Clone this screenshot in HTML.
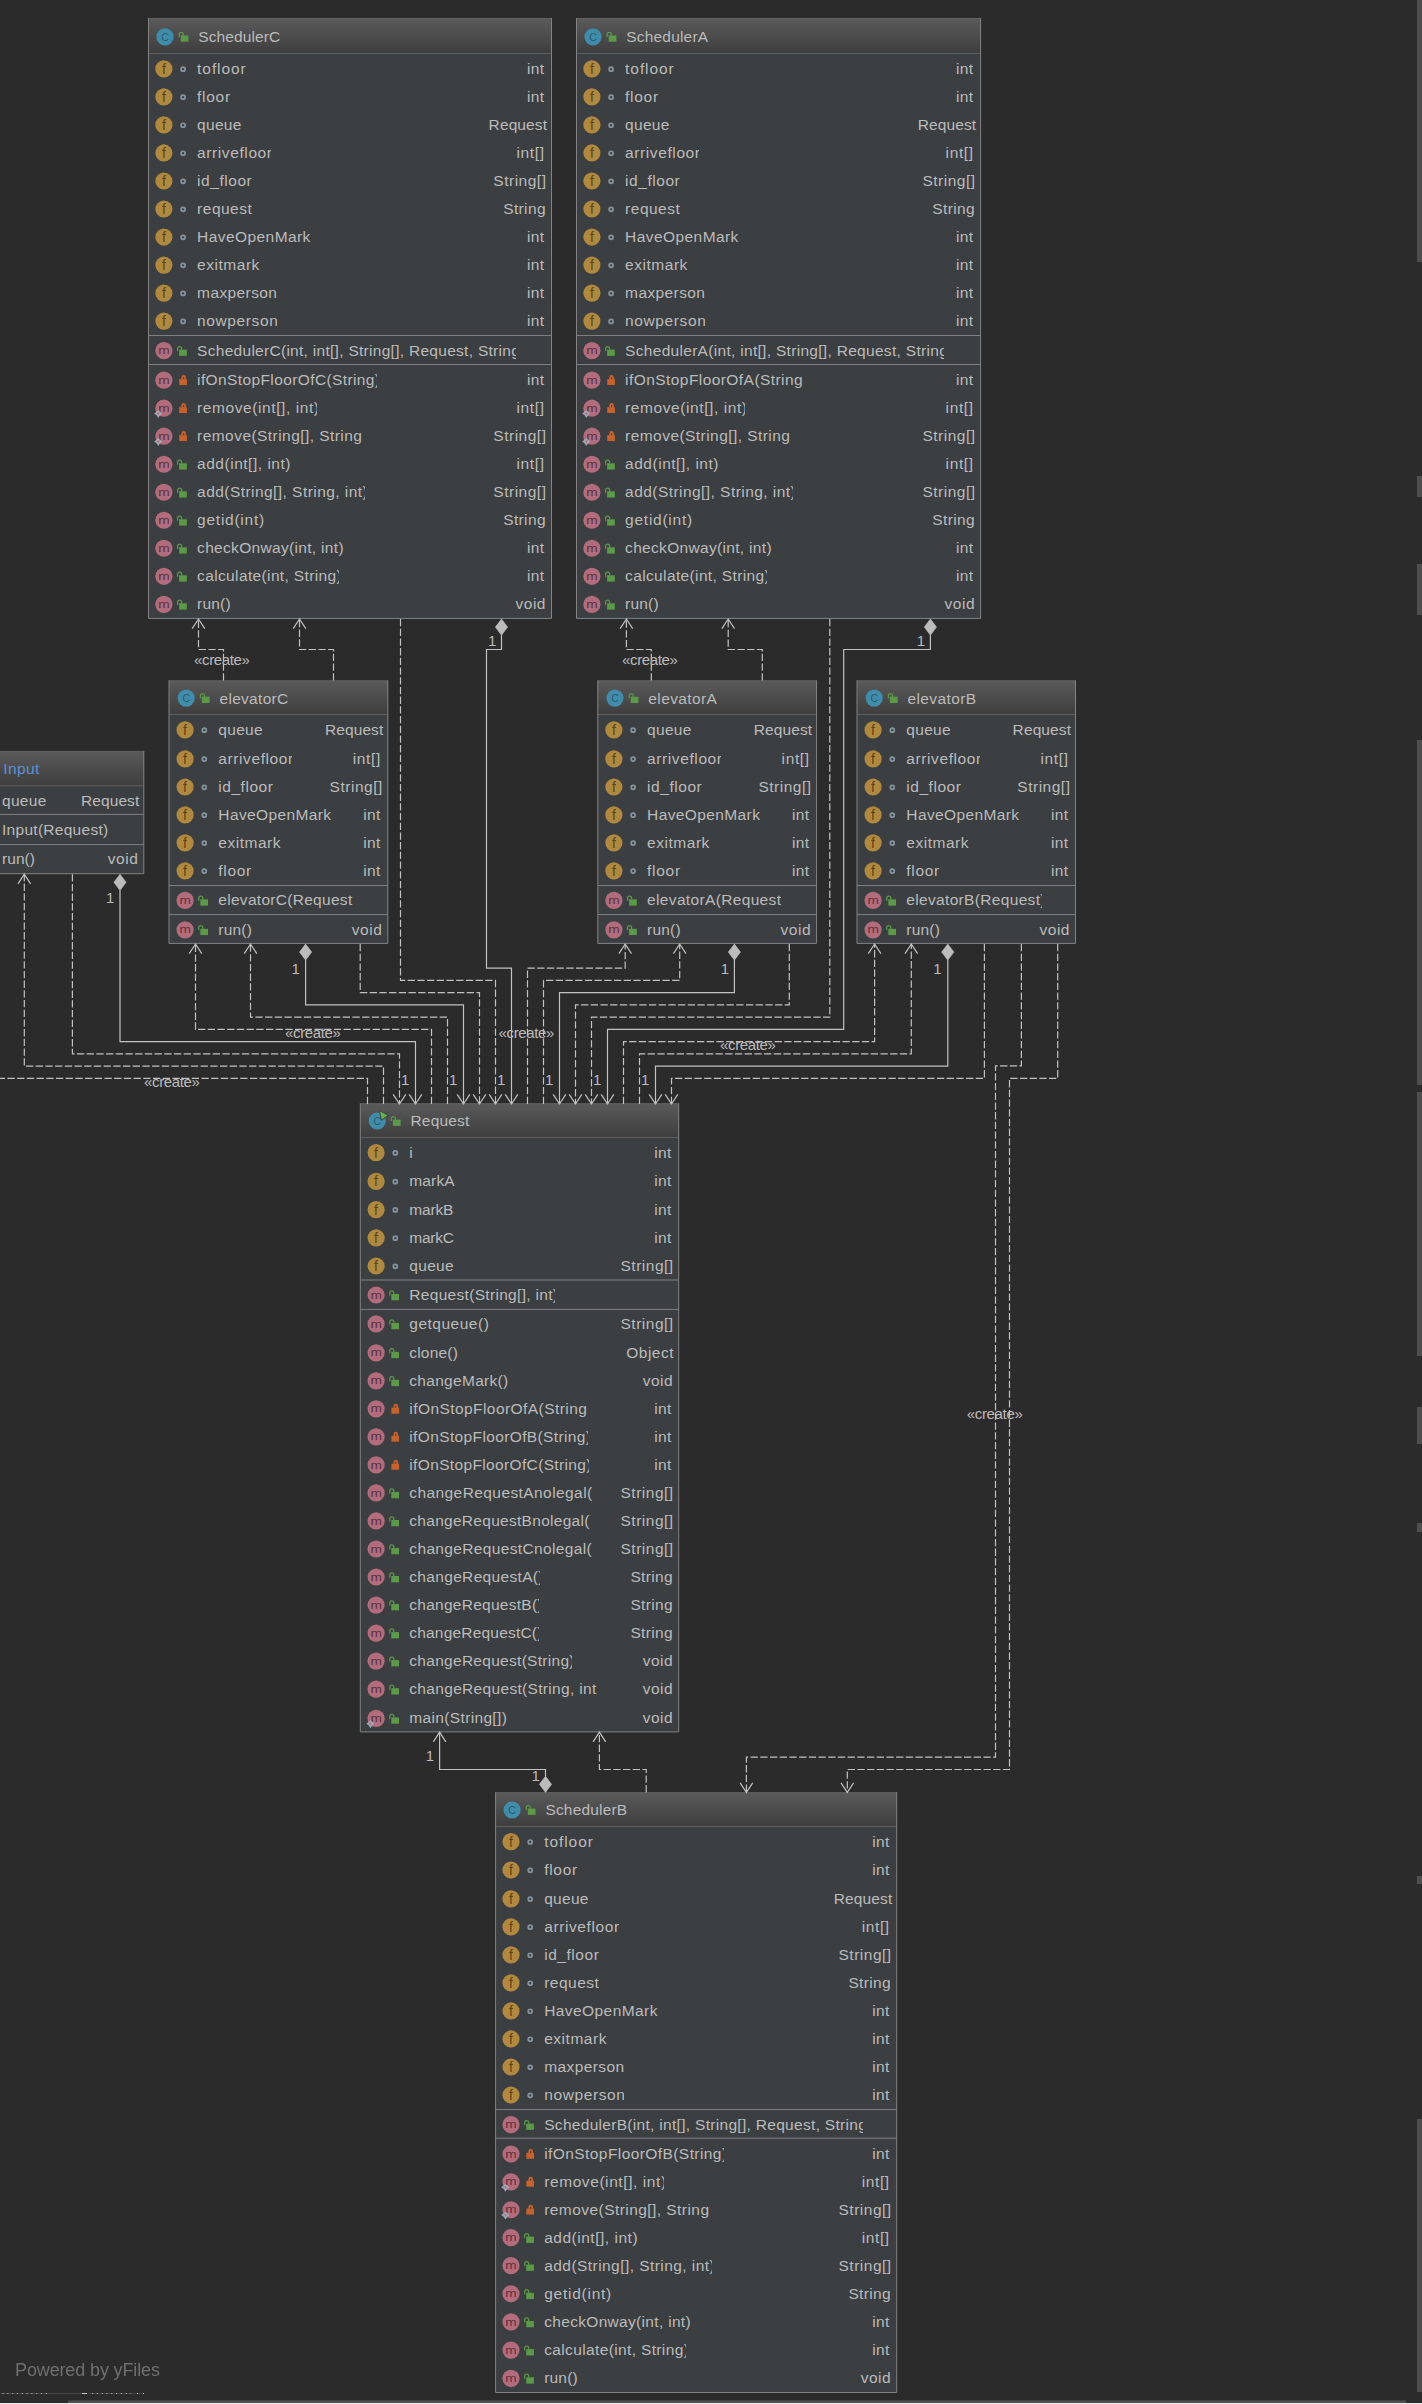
<!DOCTYPE html>
<html><head><meta charset="utf-8"><title>UML</title>
<style>
html,body{margin:0;padding:0;background:#2b2b2b;}
#c{position:relative;width:1422px;height:2404px;overflow:hidden;background:#2b2b2b;font-family:"Liberation Sans", sans-serif;font-size:15.5px;color:#bbbbbb;}
.t{position:absolute;white-space:pre;line-height:28px;height:28px;overflow:hidden;}
.ty{position:absolute;white-space:pre;line-height:28px;height:28px;text-align:right;}
.lb{position:absolute;white-space:pre;font-size:15px;line-height:16px;color:#bbbbbb;letter-spacing:-0.35px;}
.one{position:absolute;white-space:pre;font-size:15px;line-height:16px;color:#bbbbbb;}
#edges{position:absolute;left:0;top:0;}
</style></head><body>
<div id="c">
<svg id="edges" width="1422" height="2404" viewBox="0 0 1422 2404"><style>.bb{fill:none;stroke:#838383;stroke-width:1}.bt{fill:none;stroke:#626262;stroke-width:1}.hl{fill:none;stroke:#5f5f5f;stroke-width:1}.sl{fill:none;stroke:#808080;stroke-width:1}.it{font-family:"Liberation Sans",sans-serif;text-anchor:middle}.s{fill:none;stroke:#c2c2c2;stroke-width:1.2}.ds{fill:none;stroke:#c2c2c2;stroke-width:1.2;stroke-dasharray:7.3 2.4}.d{fill:#bcbcbc;stroke:#bcbcbc;stroke-width:0.6}</style><defs><linearGradient id="hg0" gradientUnits="userSpaceOnUse" x1="0" y1="18.50" x2="0" y2="53.50"><stop offset="0" stop-color="#5a5a5a"/><stop offset="1" stop-color="#3e3e3e"/></linearGradient><linearGradient id="hg1" gradientUnits="userSpaceOnUse" x1="0" y1="18.50" x2="0" y2="53.50"><stop offset="0" stop-color="#5a5a5a"/><stop offset="1" stop-color="#3e3e3e"/></linearGradient><linearGradient id="hg2" gradientUnits="userSpaceOnUse" x1="0" y1="680.80" x2="0" y2="714.50"><stop offset="0" stop-color="#5a5a5a"/><stop offset="1" stop-color="#3e3e3e"/></linearGradient><linearGradient id="hg3" gradientUnits="userSpaceOnUse" x1="0" y1="680.80" x2="0" y2="714.50"><stop offset="0" stop-color="#5a5a5a"/><stop offset="1" stop-color="#3e3e3e"/></linearGradient><linearGradient id="hg4" gradientUnits="userSpaceOnUse" x1="0" y1="680.80" x2="0" y2="714.50"><stop offset="0" stop-color="#5a5a5a"/><stop offset="1" stop-color="#3e3e3e"/></linearGradient><linearGradient id="hg5" gradientUnits="userSpaceOnUse" x1="0" y1="751.40" x2="0" y2="785.70"><stop offset="0" stop-color="#5a5a5a"/><stop offset="1" stop-color="#3e3e3e"/></linearGradient><linearGradient id="hg6" gradientUnits="userSpaceOnUse" x1="0" y1="1103.70" x2="0" y2="1137.50"><stop offset="0" stop-color="#5a5a5a"/><stop offset="1" stop-color="#3e3e3e"/></linearGradient><linearGradient id="hg7" gradientUnits="userSpaceOnUse" x1="0" y1="1792.70" x2="0" y2="1826.50"><stop offset="0" stop-color="#5a5a5a"/><stop offset="1" stop-color="#3e3e3e"/></linearGradient></defs><rect x="148.50" y="18.50" width="403.00" height="599.90" fill="#3c3f41"/><rect x="148.50" y="18.50" width="403.00" height="35.00" fill="url(#hg0)"/><path d="M148.50 53.50 H551.50" class="hl"/><path d="M148.50 335.50 H551.50 M148.50 364.50 H551.50" class="sl"/><path d="M148.50 18.50 H551.50" class="bt"/><path d="M148.50 18.00 V618.40 H551.50 V18.00" class="bb"/>
<rect x="576.50" y="18.50" width="404.10" height="599.90" fill="#3c3f41"/><rect x="576.50" y="18.50" width="404.10" height="35.00" fill="url(#hg1)"/><path d="M576.50 53.50 H980.60" class="hl"/><path d="M576.50 335.50 H980.60 M576.50 364.50 H980.60" class="sl"/><path d="M576.50 18.50 H980.60" class="bt"/><path d="M576.50 18.00 V618.40 H980.60 V18.00" class="bb"/>
<rect x="169.00" y="680.80" width="218.80" height="262.60" fill="#3c3f41"/><rect x="169.00" y="680.80" width="218.80" height="33.70" fill="url(#hg2)"/><path d="M169.00 714.50 H387.80" class="hl"/><path d="M169.00 885.50 H387.80 M169.00 914.60 H387.80" class="sl"/><path d="M169.00 680.80 H387.80" class="bt"/><path d="M169.00 680.30 V943.40 H387.80 V680.30" class="bb"/>
<rect x="597.80" y="680.80" width="218.80" height="262.60" fill="#3c3f41"/><rect x="597.80" y="680.80" width="218.80" height="33.70" fill="url(#hg3)"/><path d="M597.80 714.50 H816.60" class="hl"/><path d="M597.80 885.50 H816.60 M597.80 914.60 H816.60" class="sl"/><path d="M597.80 680.80 H816.60" class="bt"/><path d="M597.80 680.30 V943.40 H816.60 V680.30" class="bb"/>
<rect x="857.00" y="680.80" width="218.50" height="262.60" fill="#3c3f41"/><rect x="857.00" y="680.80" width="218.50" height="33.70" fill="url(#hg4)"/><path d="M857.00 714.50 H1075.50" class="hl"/><path d="M857.00 885.50 H1075.50 M857.00 914.60 H1075.50" class="sl"/><path d="M857.00 680.80 H1075.50" class="bt"/><path d="M857.00 680.30 V943.40 H1075.50 V680.30" class="bb"/>
<rect x="-46.60" y="751.40" width="190.40" height="122.30" fill="#3c3f41"/><rect x="-46.60" y="751.40" width="190.40" height="34.30" fill="url(#hg5)"/><path d="M-46.60 785.70 H143.80" class="hl"/><path d="M-46.60 814.40 H143.80 M-46.60 844.60 H143.80" class="sl"/><path d="M-46.60 751.40 H143.80" class="bt"/><path d="M-46.60 750.90 V873.70 H143.80 V750.90" class="bb"/>
<rect x="360.30" y="1103.70" width="318.40" height="628.20" fill="#3c3f41"/><rect x="360.30" y="1103.70" width="318.40" height="33.80" fill="url(#hg6)"/><path d="M360.30 1137.50 H678.70" class="hl"/><path d="M360.30 1280.00 H678.70 M360.30 1309.40 H678.70" class="sl"/><path d="M360.30 1103.70 H678.70" class="bt"/><path d="M360.30 1103.20 V1731.90 H678.70 V1103.20" class="bb"/>
<rect x="495.60" y="1792.70" width="401.10" height="599.80" fill="#3c3f41"/><rect x="495.60" y="1792.70" width="401.10" height="33.80" fill="url(#hg7)"/><path d="M495.60 1826.50 H896.70" class="hl"/><path d="M495.60 2109.50 H896.70 M495.60 2138.20 H896.70" class="sl"/><path d="M495.60 1792.70 H896.70" class="bt"/><path d="M495.60 1792.20 V2392.50 H896.70 V1792.20" class="bb"/>
<circle cx="165.00" cy="36.80" r="8.6" fill="#3f8dab"/><text x="0" y="3.7" font-size="10.5" transform="translate(165.00 37.00)" fill="#21414f" fill-opacity="0.7" class="it">C</text><rect x="180.70" y="35.40" width="7.7" height="6.3" fill="#5b9a47"/><path d="M179.20 36.90 V34.30 A2 2 0 0 1 183.20 34.30 V35.60" fill="none" stroke="#5b9a47" stroke-width="1.25"/><circle cx="163.90" cy="68.90" r="8.6" fill="#b0893e"/><text x="0" y="4.7" font-size="13.8" transform="translate(163.80 69.10)" fill="#4d3813" fill-opacity="0.9" class="it">f</text><circle cx="183.10" cy="69.20" r="2.0" fill="none" stroke="#8495a0" stroke-width="1.7"/><circle cx="163.90" cy="96.92" r="8.6" fill="#b0893e"/><text x="0" y="4.7" font-size="13.8" transform="translate(163.80 97.12)" fill="#4d3813" fill-opacity="0.9" class="it">f</text><circle cx="183.10" cy="97.22" r="2.0" fill="none" stroke="#8495a0" stroke-width="1.7"/><circle cx="163.90" cy="124.94" r="8.6" fill="#b0893e"/><text x="0" y="4.7" font-size="13.8" transform="translate(163.80 125.14)" fill="#4d3813" fill-opacity="0.9" class="it">f</text><circle cx="183.10" cy="125.24" r="2.0" fill="none" stroke="#8495a0" stroke-width="1.7"/><circle cx="163.90" cy="152.96" r="8.6" fill="#b0893e"/><text x="0" y="4.7" font-size="13.8" transform="translate(163.80 153.16)" fill="#4d3813" fill-opacity="0.9" class="it">f</text><circle cx="183.10" cy="153.26" r="2.0" fill="none" stroke="#8495a0" stroke-width="1.7"/><circle cx="163.90" cy="180.98" r="8.6" fill="#b0893e"/><text x="0" y="4.7" font-size="13.8" transform="translate(163.80 181.18)" fill="#4d3813" fill-opacity="0.9" class="it">f</text><circle cx="183.10" cy="181.28" r="2.0" fill="none" stroke="#8495a0" stroke-width="1.7"/><circle cx="163.90" cy="209.00" r="8.6" fill="#b0893e"/><text x="0" y="4.7" font-size="13.8" transform="translate(163.80 209.20)" fill="#4d3813" fill-opacity="0.9" class="it">f</text><circle cx="183.10" cy="209.30" r="2.0" fill="none" stroke="#8495a0" stroke-width="1.7"/><circle cx="163.90" cy="237.03" r="8.6" fill="#b0893e"/><text x="0" y="4.7" font-size="13.8" transform="translate(163.80 237.22)" fill="#4d3813" fill-opacity="0.9" class="it">f</text><circle cx="183.10" cy="237.33" r="2.0" fill="none" stroke="#8495a0" stroke-width="1.7"/><circle cx="163.90" cy="265.05" r="8.6" fill="#b0893e"/><text x="0" y="4.7" font-size="13.8" transform="translate(163.80 265.25)" fill="#4d3813" fill-opacity="0.9" class="it">f</text><circle cx="183.10" cy="265.35" r="2.0" fill="none" stroke="#8495a0" stroke-width="1.7"/><circle cx="163.90" cy="293.08" r="8.6" fill="#b0893e"/><text x="0" y="4.7" font-size="13.8" transform="translate(163.80 293.28)" fill="#4d3813" fill-opacity="0.9" class="it">f</text><circle cx="183.10" cy="293.38" r="2.0" fill="none" stroke="#8495a0" stroke-width="1.7"/><circle cx="163.90" cy="321.10" r="8.6" fill="#b0893e"/><text x="0" y="4.7" font-size="13.8" transform="translate(163.80 321.30)" fill="#4d3813" fill-opacity="0.9" class="it">f</text><circle cx="183.10" cy="321.40" r="2.0" fill="none" stroke="#8495a0" stroke-width="1.7"/><circle cx="163.90" cy="350.60" r="8.6" fill="#b26c7c"/><text x="0" y="3.3" font-size="12.5" transform="translate(163.90 351.50) scale(1.1 0.82)" fill="#4a2630" fill-opacity="0.85" class="it">m</text><rect x="179.10" y="349.60" width="7.7" height="6.3" fill="#5b9a47"/><path d="M177.60 351.10 V348.50 A2 2 0 0 1 181.60 348.50 V349.80" fill="none" stroke="#5b9a47" stroke-width="1.25"/><circle cx="163.90" cy="380.20" r="8.6" fill="#b26c7c"/><text x="0" y="3.3" font-size="12.5" transform="translate(163.90 381.10) scale(1.1 0.82)" fill="#4a2630" fill-opacity="0.85" class="it">m</text><rect x="179.20" y="379.10" width="7.7" height="5.9" fill="#c8622a"/><path d="M182.20 379.30 V377.40 A1.4 1.4 0 0 1 185.00 377.40 V379.30" fill="none" stroke="#c8622a" stroke-width="1.8"/><circle cx="163.90" cy="408.21" r="8.6" fill="#b26c7c"/><text x="0" y="3.3" font-size="12.5" transform="translate(163.90 409.11) scale(1.1 0.82)" fill="#4a2630" fill-opacity="0.85" class="it">m</text><path transform="translate(158.30 413.51)" d="M0 -3.5 L1.8 -1.7 L3.9 0 L1.8 1.8 L0 4.5 L-1.8 1.8 L-4.2 0 L-1.8 -1.7 Z" fill="#9db2bc" fill-opacity="0.92"/><path transform="translate(158.30 413.51)" d="M0 -1.5 L1.5 0 L0 1.5 L-1.5 0 Z" fill="#c0707f"/><rect x="179.20" y="407.11" width="7.7" height="5.9" fill="#c8622a"/><path d="M182.20 407.31 V405.41 A1.4 1.4 0 0 1 185.00 405.41 V407.31" fill="none" stroke="#c8622a" stroke-width="1.8"/><circle cx="163.90" cy="436.22" r="8.6" fill="#b26c7c"/><text x="0" y="3.3" font-size="12.5" transform="translate(163.90 437.12) scale(1.1 0.82)" fill="#4a2630" fill-opacity="0.85" class="it">m</text><path transform="translate(158.30 441.52)" d="M0 -3.5 L1.8 -1.7 L3.9 0 L1.8 1.8 L0 4.5 L-1.8 1.8 L-4.2 0 L-1.8 -1.7 Z" fill="#9db2bc" fill-opacity="0.92"/><path transform="translate(158.30 441.52)" d="M0 -1.5 L1.5 0 L0 1.5 L-1.5 0 Z" fill="#c0707f"/><rect x="179.20" y="435.12" width="7.7" height="5.9" fill="#c8622a"/><path d="M182.20 435.32 V433.42 A1.4 1.4 0 0 1 185.00 433.42 V435.32" fill="none" stroke="#c8622a" stroke-width="1.8"/><circle cx="163.90" cy="464.24" r="8.6" fill="#b26c7c"/><text x="0" y="3.3" font-size="12.5" transform="translate(163.90 465.14) scale(1.1 0.82)" fill="#4a2630" fill-opacity="0.85" class="it">m</text><rect x="179.10" y="463.24" width="7.7" height="6.3" fill="#5b9a47"/><path d="M177.60 464.74 V462.14 A2 2 0 0 1 181.60 462.14 V463.44" fill="none" stroke="#5b9a47" stroke-width="1.25"/><circle cx="163.90" cy="492.25" r="8.6" fill="#b26c7c"/><text x="0" y="3.3" font-size="12.5" transform="translate(163.90 493.15) scale(1.1 0.82)" fill="#4a2630" fill-opacity="0.85" class="it">m</text><rect x="179.10" y="491.25" width="7.7" height="6.3" fill="#5b9a47"/><path d="M177.60 492.75 V490.15 A2 2 0 0 1 181.60 490.15 V491.45" fill="none" stroke="#5b9a47" stroke-width="1.25"/><circle cx="163.90" cy="520.26" r="8.6" fill="#b26c7c"/><text x="0" y="3.3" font-size="12.5" transform="translate(163.90 521.16) scale(1.1 0.82)" fill="#4a2630" fill-opacity="0.85" class="it">m</text><rect x="179.10" y="519.26" width="7.7" height="6.3" fill="#5b9a47"/><path d="M177.60 520.76 V518.16 A2 2 0 0 1 181.60 518.16 V519.46" fill="none" stroke="#5b9a47" stroke-width="1.25"/><circle cx="163.90" cy="548.27" r="8.6" fill="#b26c7c"/><text x="0" y="3.3" font-size="12.5" transform="translate(163.90 549.17) scale(1.1 0.82)" fill="#4a2630" fill-opacity="0.85" class="it">m</text><rect x="179.10" y="547.27" width="7.7" height="6.3" fill="#5b9a47"/><path d="M177.60 548.77 V546.17 A2 2 0 0 1 181.60 546.17 V547.48" fill="none" stroke="#5b9a47" stroke-width="1.25"/><circle cx="163.90" cy="576.29" r="8.6" fill="#b26c7c"/><text x="0" y="3.3" font-size="12.5" transform="translate(163.90 577.19) scale(1.1 0.82)" fill="#4a2630" fill-opacity="0.85" class="it">m</text><rect x="179.10" y="575.29" width="7.7" height="6.3" fill="#5b9a47"/><path d="M177.60 576.79 V574.19 A2 2 0 0 1 181.60 574.19 V575.49" fill="none" stroke="#5b9a47" stroke-width="1.25"/><circle cx="163.90" cy="604.30" r="8.6" fill="#b26c7c"/><text x="0" y="3.3" font-size="12.5" transform="translate(163.90 605.20) scale(1.1 0.82)" fill="#4a2630" fill-opacity="0.85" class="it">m</text><rect x="179.10" y="603.30" width="7.7" height="6.3" fill="#5b9a47"/><path d="M177.60 604.80 V602.20 A2 2 0 0 1 181.60 602.20 V603.50" fill="none" stroke="#5b9a47" stroke-width="1.25"/><circle cx="593.00" cy="36.80" r="8.6" fill="#3f8dab"/><text x="0" y="3.7" font-size="10.5" transform="translate(593.00 37.00)" fill="#21414f" fill-opacity="0.7" class="it">C</text><rect x="608.70" y="35.40" width="7.7" height="6.3" fill="#5b9a47"/><path d="M607.20 36.90 V34.30 A2 2 0 0 1 611.20 34.30 V35.60" fill="none" stroke="#5b9a47" stroke-width="1.25"/><circle cx="591.90" cy="68.90" r="8.6" fill="#b0893e"/><text x="0" y="4.7" font-size="13.8" transform="translate(591.80 69.10)" fill="#4d3813" fill-opacity="0.9" class="it">f</text><circle cx="611.10" cy="69.20" r="2.0" fill="none" stroke="#8495a0" stroke-width="1.7"/><circle cx="591.90" cy="96.92" r="8.6" fill="#b0893e"/><text x="0" y="4.7" font-size="13.8" transform="translate(591.80 97.12)" fill="#4d3813" fill-opacity="0.9" class="it">f</text><circle cx="611.10" cy="97.22" r="2.0" fill="none" stroke="#8495a0" stroke-width="1.7"/><circle cx="591.90" cy="124.94" r="8.6" fill="#b0893e"/><text x="0" y="4.7" font-size="13.8" transform="translate(591.80 125.14)" fill="#4d3813" fill-opacity="0.9" class="it">f</text><circle cx="611.10" cy="125.24" r="2.0" fill="none" stroke="#8495a0" stroke-width="1.7"/><circle cx="591.90" cy="152.96" r="8.6" fill="#b0893e"/><text x="0" y="4.7" font-size="13.8" transform="translate(591.80 153.16)" fill="#4d3813" fill-opacity="0.9" class="it">f</text><circle cx="611.10" cy="153.26" r="2.0" fill="none" stroke="#8495a0" stroke-width="1.7"/><circle cx="591.90" cy="180.98" r="8.6" fill="#b0893e"/><text x="0" y="4.7" font-size="13.8" transform="translate(591.80 181.18)" fill="#4d3813" fill-opacity="0.9" class="it">f</text><circle cx="611.10" cy="181.28" r="2.0" fill="none" stroke="#8495a0" stroke-width="1.7"/><circle cx="591.90" cy="209.00" r="8.6" fill="#b0893e"/><text x="0" y="4.7" font-size="13.8" transform="translate(591.80 209.20)" fill="#4d3813" fill-opacity="0.9" class="it">f</text><circle cx="611.10" cy="209.30" r="2.0" fill="none" stroke="#8495a0" stroke-width="1.7"/><circle cx="591.90" cy="237.03" r="8.6" fill="#b0893e"/><text x="0" y="4.7" font-size="13.8" transform="translate(591.80 237.22)" fill="#4d3813" fill-opacity="0.9" class="it">f</text><circle cx="611.10" cy="237.33" r="2.0" fill="none" stroke="#8495a0" stroke-width="1.7"/><circle cx="591.90" cy="265.05" r="8.6" fill="#b0893e"/><text x="0" y="4.7" font-size="13.8" transform="translate(591.80 265.25)" fill="#4d3813" fill-opacity="0.9" class="it">f</text><circle cx="611.10" cy="265.35" r="2.0" fill="none" stroke="#8495a0" stroke-width="1.7"/><circle cx="591.90" cy="293.08" r="8.6" fill="#b0893e"/><text x="0" y="4.7" font-size="13.8" transform="translate(591.80 293.28)" fill="#4d3813" fill-opacity="0.9" class="it">f</text><circle cx="611.10" cy="293.38" r="2.0" fill="none" stroke="#8495a0" stroke-width="1.7"/><circle cx="591.90" cy="321.10" r="8.6" fill="#b0893e"/><text x="0" y="4.7" font-size="13.8" transform="translate(591.80 321.30)" fill="#4d3813" fill-opacity="0.9" class="it">f</text><circle cx="611.10" cy="321.40" r="2.0" fill="none" stroke="#8495a0" stroke-width="1.7"/><circle cx="591.90" cy="350.60" r="8.6" fill="#b26c7c"/><text x="0" y="3.3" font-size="12.5" transform="translate(591.90 351.50) scale(1.1 0.82)" fill="#4a2630" fill-opacity="0.85" class="it">m</text><rect x="607.10" y="349.60" width="7.7" height="6.3" fill="#5b9a47"/><path d="M605.60 351.10 V348.50 A2 2 0 0 1 609.60 348.50 V349.80" fill="none" stroke="#5b9a47" stroke-width="1.25"/><circle cx="591.90" cy="380.20" r="8.6" fill="#b26c7c"/><text x="0" y="3.3" font-size="12.5" transform="translate(591.90 381.10) scale(1.1 0.82)" fill="#4a2630" fill-opacity="0.85" class="it">m</text><rect x="607.20" y="379.10" width="7.7" height="5.9" fill="#c8622a"/><path d="M610.20 379.30 V377.40 A1.4 1.4 0 0 1 613.00 377.40 V379.30" fill="none" stroke="#c8622a" stroke-width="1.8"/><circle cx="591.90" cy="408.21" r="8.6" fill="#b26c7c"/><text x="0" y="3.3" font-size="12.5" transform="translate(591.90 409.11) scale(1.1 0.82)" fill="#4a2630" fill-opacity="0.85" class="it">m</text><path transform="translate(586.30 413.51)" d="M0 -3.5 L1.8 -1.7 L3.9 0 L1.8 1.8 L0 4.5 L-1.8 1.8 L-4.2 0 L-1.8 -1.7 Z" fill="#9db2bc" fill-opacity="0.92"/><path transform="translate(586.30 413.51)" d="M0 -1.5 L1.5 0 L0 1.5 L-1.5 0 Z" fill="#c0707f"/><rect x="607.20" y="407.11" width="7.7" height="5.9" fill="#c8622a"/><path d="M610.20 407.31 V405.41 A1.4 1.4 0 0 1 613.00 405.41 V407.31" fill="none" stroke="#c8622a" stroke-width="1.8"/><circle cx="591.90" cy="436.22" r="8.6" fill="#b26c7c"/><text x="0" y="3.3" font-size="12.5" transform="translate(591.90 437.12) scale(1.1 0.82)" fill="#4a2630" fill-opacity="0.85" class="it">m</text><path transform="translate(586.30 441.52)" d="M0 -3.5 L1.8 -1.7 L3.9 0 L1.8 1.8 L0 4.5 L-1.8 1.8 L-4.2 0 L-1.8 -1.7 Z" fill="#9db2bc" fill-opacity="0.92"/><path transform="translate(586.30 441.52)" d="M0 -1.5 L1.5 0 L0 1.5 L-1.5 0 Z" fill="#c0707f"/><rect x="607.20" y="435.12" width="7.7" height="5.9" fill="#c8622a"/><path d="M610.20 435.32 V433.42 A1.4 1.4 0 0 1 613.00 433.42 V435.32" fill="none" stroke="#c8622a" stroke-width="1.8"/><circle cx="591.90" cy="464.24" r="8.6" fill="#b26c7c"/><text x="0" y="3.3" font-size="12.5" transform="translate(591.90 465.14) scale(1.1 0.82)" fill="#4a2630" fill-opacity="0.85" class="it">m</text><rect x="607.10" y="463.24" width="7.7" height="6.3" fill="#5b9a47"/><path d="M605.60 464.74 V462.14 A2 2 0 0 1 609.60 462.14 V463.44" fill="none" stroke="#5b9a47" stroke-width="1.25"/><circle cx="591.90" cy="492.25" r="8.6" fill="#b26c7c"/><text x="0" y="3.3" font-size="12.5" transform="translate(591.90 493.15) scale(1.1 0.82)" fill="#4a2630" fill-opacity="0.85" class="it">m</text><rect x="607.10" y="491.25" width="7.7" height="6.3" fill="#5b9a47"/><path d="M605.60 492.75 V490.15 A2 2 0 0 1 609.60 490.15 V491.45" fill="none" stroke="#5b9a47" stroke-width="1.25"/><circle cx="591.90" cy="520.26" r="8.6" fill="#b26c7c"/><text x="0" y="3.3" font-size="12.5" transform="translate(591.90 521.16) scale(1.1 0.82)" fill="#4a2630" fill-opacity="0.85" class="it">m</text><rect x="607.10" y="519.26" width="7.7" height="6.3" fill="#5b9a47"/><path d="M605.60 520.76 V518.16 A2 2 0 0 1 609.60 518.16 V519.46" fill="none" stroke="#5b9a47" stroke-width="1.25"/><circle cx="591.90" cy="548.27" r="8.6" fill="#b26c7c"/><text x="0" y="3.3" font-size="12.5" transform="translate(591.90 549.17) scale(1.1 0.82)" fill="#4a2630" fill-opacity="0.85" class="it">m</text><rect x="607.10" y="547.27" width="7.7" height="6.3" fill="#5b9a47"/><path d="M605.60 548.77 V546.17 A2 2 0 0 1 609.60 546.17 V547.48" fill="none" stroke="#5b9a47" stroke-width="1.25"/><circle cx="591.90" cy="576.29" r="8.6" fill="#b26c7c"/><text x="0" y="3.3" font-size="12.5" transform="translate(591.90 577.19) scale(1.1 0.82)" fill="#4a2630" fill-opacity="0.85" class="it">m</text><rect x="607.10" y="575.29" width="7.7" height="6.3" fill="#5b9a47"/><path d="M605.60 576.79 V574.19 A2 2 0 0 1 609.60 574.19 V575.49" fill="none" stroke="#5b9a47" stroke-width="1.25"/><circle cx="591.90" cy="604.30" r="8.6" fill="#b26c7c"/><text x="0" y="3.3" font-size="12.5" transform="translate(591.90 605.20) scale(1.1 0.82)" fill="#4a2630" fill-opacity="0.85" class="it">m</text><rect x="607.10" y="603.30" width="7.7" height="6.3" fill="#5b9a47"/><path d="M605.60 604.80 V602.20 A2 2 0 0 1 609.60 602.20 V603.50" fill="none" stroke="#5b9a47" stroke-width="1.25"/><circle cx="186.20" cy="698.10" r="8.6" fill="#3f8dab"/><text x="0" y="3.7" font-size="10.5" transform="translate(186.20 698.30)" fill="#21414f" fill-opacity="0.7" class="it">C</text><rect x="201.90" y="696.70" width="7.7" height="6.3" fill="#5b9a47"/><path d="M200.40 698.20 V695.60 A2 2 0 0 1 204.40 695.60 V696.90" fill="none" stroke="#5b9a47" stroke-width="1.25"/><circle cx="185.10" cy="729.90" r="8.6" fill="#b0893e"/><text x="0" y="4.7" font-size="13.8" transform="translate(185.00 730.10)" fill="#4d3813" fill-opacity="0.9" class="it">f</text><circle cx="204.30" cy="730.20" r="2.0" fill="none" stroke="#8495a0" stroke-width="1.7"/><circle cx="185.10" cy="758.80" r="8.6" fill="#b0893e"/><text x="0" y="4.7" font-size="13.8" transform="translate(185.00 759.00)" fill="#4d3813" fill-opacity="0.9" class="it">f</text><circle cx="204.30" cy="759.10" r="2.0" fill="none" stroke="#8495a0" stroke-width="1.7"/><circle cx="185.10" cy="787.00" r="8.6" fill="#b0893e"/><text x="0" y="4.7" font-size="13.8" transform="translate(185.00 787.20)" fill="#4d3813" fill-opacity="0.9" class="it">f</text><circle cx="204.30" cy="787.30" r="2.0" fill="none" stroke="#8495a0" stroke-width="1.7"/><circle cx="185.10" cy="814.90" r="8.6" fill="#b0893e"/><text x="0" y="4.7" font-size="13.8" transform="translate(185.00 815.10)" fill="#4d3813" fill-opacity="0.9" class="it">f</text><circle cx="204.30" cy="815.20" r="2.0" fill="none" stroke="#8495a0" stroke-width="1.7"/><circle cx="185.10" cy="842.80" r="8.6" fill="#b0893e"/><text x="0" y="4.7" font-size="13.8" transform="translate(185.00 843.00)" fill="#4d3813" fill-opacity="0.9" class="it">f</text><circle cx="204.30" cy="843.10" r="2.0" fill="none" stroke="#8495a0" stroke-width="1.7"/><circle cx="185.10" cy="870.80" r="8.6" fill="#b0893e"/><text x="0" y="4.7" font-size="13.8" transform="translate(185.00 871.00)" fill="#4d3813" fill-opacity="0.9" class="it">f</text><circle cx="204.30" cy="871.10" r="2.0" fill="none" stroke="#8495a0" stroke-width="1.7"/><circle cx="185.10" cy="900.30" r="8.6" fill="#b26c7c"/><text x="0" y="3.3" font-size="12.5" transform="translate(185.10 901.20) scale(1.1 0.82)" fill="#4a2630" fill-opacity="0.85" class="it">m</text><rect x="200.30" y="899.30" width="7.7" height="6.3" fill="#5b9a47"/><path d="M198.80 900.80 V898.20 A2 2 0 0 1 202.80 898.20 V899.50" fill="none" stroke="#5b9a47" stroke-width="1.25"/><circle cx="185.10" cy="929.80" r="8.6" fill="#b26c7c"/><text x="0" y="3.3" font-size="12.5" transform="translate(185.10 930.70) scale(1.1 0.82)" fill="#4a2630" fill-opacity="0.85" class="it">m</text><rect x="200.30" y="928.80" width="7.7" height="6.3" fill="#5b9a47"/><path d="M198.80 930.30 V927.70 A2 2 0 0 1 202.80 927.70 V929.00" fill="none" stroke="#5b9a47" stroke-width="1.25"/><circle cx="615.00" cy="698.10" r="8.6" fill="#3f8dab"/><text x="0" y="3.7" font-size="10.5" transform="translate(615.00 698.30)" fill="#21414f" fill-opacity="0.7" class="it">C</text><rect x="630.70" y="696.70" width="7.7" height="6.3" fill="#5b9a47"/><path d="M629.20 698.20 V695.60 A2 2 0 0 1 633.20 695.60 V696.90" fill="none" stroke="#5b9a47" stroke-width="1.25"/><circle cx="613.90" cy="729.90" r="8.6" fill="#b0893e"/><text x="0" y="4.7" font-size="13.8" transform="translate(613.80 730.10)" fill="#4d3813" fill-opacity="0.9" class="it">f</text><circle cx="633.10" cy="730.20" r="2.0" fill="none" stroke="#8495a0" stroke-width="1.7"/><circle cx="613.90" cy="758.80" r="8.6" fill="#b0893e"/><text x="0" y="4.7" font-size="13.8" transform="translate(613.80 759.00)" fill="#4d3813" fill-opacity="0.9" class="it">f</text><circle cx="633.10" cy="759.10" r="2.0" fill="none" stroke="#8495a0" stroke-width="1.7"/><circle cx="613.90" cy="787.00" r="8.6" fill="#b0893e"/><text x="0" y="4.7" font-size="13.8" transform="translate(613.80 787.20)" fill="#4d3813" fill-opacity="0.9" class="it">f</text><circle cx="633.10" cy="787.30" r="2.0" fill="none" stroke="#8495a0" stroke-width="1.7"/><circle cx="613.90" cy="814.90" r="8.6" fill="#b0893e"/><text x="0" y="4.7" font-size="13.8" transform="translate(613.80 815.10)" fill="#4d3813" fill-opacity="0.9" class="it">f</text><circle cx="633.10" cy="815.20" r="2.0" fill="none" stroke="#8495a0" stroke-width="1.7"/><circle cx="613.90" cy="842.80" r="8.6" fill="#b0893e"/><text x="0" y="4.7" font-size="13.8" transform="translate(613.80 843.00)" fill="#4d3813" fill-opacity="0.9" class="it">f</text><circle cx="633.10" cy="843.10" r="2.0" fill="none" stroke="#8495a0" stroke-width="1.7"/><circle cx="613.90" cy="870.80" r="8.6" fill="#b0893e"/><text x="0" y="4.7" font-size="13.8" transform="translate(613.80 871.00)" fill="#4d3813" fill-opacity="0.9" class="it">f</text><circle cx="633.10" cy="871.10" r="2.0" fill="none" stroke="#8495a0" stroke-width="1.7"/><circle cx="613.90" cy="900.30" r="8.6" fill="#b26c7c"/><text x="0" y="3.3" font-size="12.5" transform="translate(613.90 901.20) scale(1.1 0.82)" fill="#4a2630" fill-opacity="0.85" class="it">m</text><rect x="629.10" y="899.30" width="7.7" height="6.3" fill="#5b9a47"/><path d="M627.60 900.80 V898.20 A2 2 0 0 1 631.60 898.20 V899.50" fill="none" stroke="#5b9a47" stroke-width="1.25"/><circle cx="613.90" cy="929.80" r="8.6" fill="#b26c7c"/><text x="0" y="3.3" font-size="12.5" transform="translate(613.90 930.70) scale(1.1 0.82)" fill="#4a2630" fill-opacity="0.85" class="it">m</text><rect x="629.10" y="928.80" width="7.7" height="6.3" fill="#5b9a47"/><path d="M627.60 930.30 V927.70 A2 2 0 0 1 631.60 927.70 V929.00" fill="none" stroke="#5b9a47" stroke-width="1.25"/><circle cx="874.20" cy="698.10" r="8.6" fill="#3f8dab"/><text x="0" y="3.7" font-size="10.5" transform="translate(874.20 698.30)" fill="#21414f" fill-opacity="0.7" class="it">C</text><rect x="889.90" y="696.70" width="7.7" height="6.3" fill="#5b9a47"/><path d="M888.40 698.20 V695.60 A2 2 0 0 1 892.40 695.60 V696.90" fill="none" stroke="#5b9a47" stroke-width="1.25"/><circle cx="873.10" cy="729.90" r="8.6" fill="#b0893e"/><text x="0" y="4.7" font-size="13.8" transform="translate(873.00 730.10)" fill="#4d3813" fill-opacity="0.9" class="it">f</text><circle cx="892.30" cy="730.20" r="2.0" fill="none" stroke="#8495a0" stroke-width="1.7"/><circle cx="873.10" cy="758.80" r="8.6" fill="#b0893e"/><text x="0" y="4.7" font-size="13.8" transform="translate(873.00 759.00)" fill="#4d3813" fill-opacity="0.9" class="it">f</text><circle cx="892.30" cy="759.10" r="2.0" fill="none" stroke="#8495a0" stroke-width="1.7"/><circle cx="873.10" cy="787.00" r="8.6" fill="#b0893e"/><text x="0" y="4.7" font-size="13.8" transform="translate(873.00 787.20)" fill="#4d3813" fill-opacity="0.9" class="it">f</text><circle cx="892.30" cy="787.30" r="2.0" fill="none" stroke="#8495a0" stroke-width="1.7"/><circle cx="873.10" cy="814.90" r="8.6" fill="#b0893e"/><text x="0" y="4.7" font-size="13.8" transform="translate(873.00 815.10)" fill="#4d3813" fill-opacity="0.9" class="it">f</text><circle cx="892.30" cy="815.20" r="2.0" fill="none" stroke="#8495a0" stroke-width="1.7"/><circle cx="873.10" cy="842.80" r="8.6" fill="#b0893e"/><text x="0" y="4.7" font-size="13.8" transform="translate(873.00 843.00)" fill="#4d3813" fill-opacity="0.9" class="it">f</text><circle cx="892.30" cy="843.10" r="2.0" fill="none" stroke="#8495a0" stroke-width="1.7"/><circle cx="873.10" cy="870.80" r="8.6" fill="#b0893e"/><text x="0" y="4.7" font-size="13.8" transform="translate(873.00 871.00)" fill="#4d3813" fill-opacity="0.9" class="it">f</text><circle cx="892.30" cy="871.10" r="2.0" fill="none" stroke="#8495a0" stroke-width="1.7"/><circle cx="873.10" cy="900.30" r="8.6" fill="#b26c7c"/><text x="0" y="3.3" font-size="12.5" transform="translate(873.10 901.20) scale(1.1 0.82)" fill="#4a2630" fill-opacity="0.85" class="it">m</text><rect x="888.30" y="899.30" width="7.7" height="6.3" fill="#5b9a47"/><path d="M886.80 900.80 V898.20 A2 2 0 0 1 890.80 898.20 V899.50" fill="none" stroke="#5b9a47" stroke-width="1.25"/><circle cx="873.10" cy="929.80" r="8.6" fill="#b26c7c"/><text x="0" y="3.3" font-size="12.5" transform="translate(873.10 930.70) scale(1.1 0.82)" fill="#4a2630" fill-opacity="0.85" class="it">m</text><rect x="888.30" y="928.80" width="7.7" height="6.3" fill="#5b9a47"/><path d="M886.80 930.30 V927.70 A2 2 0 0 1 890.80 927.70 V929.00" fill="none" stroke="#5b9a47" stroke-width="1.25"/><circle cx="-30.10" cy="768.70" r="8.6" fill="#3f8dab"/><text x="0" y="3.7" font-size="10.5" transform="translate(-30.10 768.90)" fill="#21414f" fill-opacity="0.7" class="it">C</text><rect x="-14.40" y="767.30" width="7.7" height="6.3" fill="#5b9a47"/><path d="M-15.90 768.80 V766.20 A2 2 0 0 1 -11.90 766.20 V767.50" fill="none" stroke="#5b9a47" stroke-width="1.25"/><circle cx="-31.20" cy="800.90" r="8.6" fill="#b0893e"/><text x="0" y="4.7" font-size="13.8" transform="translate(-31.30 801.10)" fill="#4d3813" fill-opacity="0.9" class="it">f</text><circle cx="-12.00" cy="801.20" r="2.0" fill="none" stroke="#8495a0" stroke-width="1.7"/><circle cx="-31.20" cy="829.80" r="8.6" fill="#b26c7c"/><text x="0" y="3.3" font-size="12.5" transform="translate(-31.20 830.70) scale(1.1 0.82)" fill="#4a2630" fill-opacity="0.85" class="it">m</text><rect x="-16.00" y="828.80" width="7.7" height="6.3" fill="#5b9a47"/><path d="M-17.50 830.30 V827.70 A2 2 0 0 1 -13.50 827.70 V829.00" fill="none" stroke="#5b9a47" stroke-width="1.25"/><circle cx="-31.20" cy="858.90" r="8.6" fill="#b26c7c"/><text x="0" y="3.3" font-size="12.5" transform="translate(-31.20 859.80) scale(1.1 0.82)" fill="#4a2630" fill-opacity="0.85" class="it">m</text><rect x="-16.00" y="857.90" width="7.7" height="6.3" fill="#5b9a47"/><path d="M-17.50 859.40 V856.80 A2 2 0 0 1 -13.50 856.80 V858.10" fill="none" stroke="#5b9a47" stroke-width="1.25"/><circle cx="377.20" cy="1121.00" r="8.6" fill="#3f8dab"/><text x="0" y="3.7" font-size="10.5" transform="translate(377.20 1121.20)" fill="#21414f" fill-opacity="0.7" class="it">C</text><path transform="translate(377.20 1121.00)" d="M2.6 -10.2 L10.4 -5.5 L4.3 -1.2 Z" fill="#3c3f41" stroke="#474a4c" stroke-width="1.6" stroke-linejoin="round"/><path transform="translate(377.20 1121.00)" d="M2.9 -9.7 L10.0 -5.5 L4.6 -1.8 Z" fill="#62b543"/><rect x="392.90" y="1119.60" width="7.7" height="6.3" fill="#5b9a47"/><path d="M391.40 1121.10 V1118.50 A2 2 0 0 1 395.40 1118.50 V1119.80" fill="none" stroke="#5b9a47" stroke-width="1.25"/><circle cx="376.10" cy="1152.60" r="8.6" fill="#b0893e"/><text x="0" y="4.7" font-size="13.8" transform="translate(376.00 1152.80)" fill="#4d3813" fill-opacity="0.9" class="it">f</text><circle cx="395.30" cy="1152.90" r="2.0" fill="none" stroke="#8495a0" stroke-width="1.7"/><circle cx="376.10" cy="1181.40" r="8.6" fill="#b0893e"/><text x="0" y="4.7" font-size="13.8" transform="translate(376.00 1181.60)" fill="#4d3813" fill-opacity="0.9" class="it">f</text><circle cx="395.30" cy="1181.70" r="2.0" fill="none" stroke="#8495a0" stroke-width="1.7"/><circle cx="376.10" cy="1209.60" r="8.6" fill="#b0893e"/><text x="0" y="4.7" font-size="13.8" transform="translate(376.00 1209.80)" fill="#4d3813" fill-opacity="0.9" class="it">f</text><circle cx="395.30" cy="1209.90" r="2.0" fill="none" stroke="#8495a0" stroke-width="1.7"/><circle cx="376.10" cy="1237.90" r="8.6" fill="#b0893e"/><text x="0" y="4.7" font-size="13.8" transform="translate(376.00 1238.10)" fill="#4d3813" fill-opacity="0.9" class="it">f</text><circle cx="395.30" cy="1238.20" r="2.0" fill="none" stroke="#8495a0" stroke-width="1.7"/><circle cx="376.10" cy="1266.00" r="8.6" fill="#b0893e"/><text x="0" y="4.7" font-size="13.8" transform="translate(376.00 1266.20)" fill="#4d3813" fill-opacity="0.9" class="it">f</text><circle cx="395.30" cy="1266.30" r="2.0" fill="none" stroke="#8495a0" stroke-width="1.7"/><circle cx="376.10" cy="1295.00" r="8.6" fill="#b26c7c"/><text x="0" y="3.3" font-size="12.5" transform="translate(376.10 1295.90) scale(1.1 0.82)" fill="#4a2630" fill-opacity="0.85" class="it">m</text><rect x="391.30" y="1294.00" width="7.7" height="6.3" fill="#5b9a47"/><path d="M389.80 1295.50 V1292.90 A2 2 0 0 1 393.80 1292.90 V1294.20" fill="none" stroke="#5b9a47" stroke-width="1.25"/><circle cx="376.10" cy="1323.90" r="8.6" fill="#b26c7c"/><text x="0" y="3.3" font-size="12.5" transform="translate(376.10 1324.80) scale(1.1 0.82)" fill="#4a2630" fill-opacity="0.85" class="it">m</text><rect x="391.30" y="1322.90" width="7.7" height="6.3" fill="#5b9a47"/><path d="M389.80 1324.40 V1321.80 A2 2 0 0 1 393.80 1321.80 V1323.10" fill="none" stroke="#5b9a47" stroke-width="1.25"/><circle cx="376.10" cy="1352.80" r="8.6" fill="#b26c7c"/><text x="0" y="3.3" font-size="12.5" transform="translate(376.10 1353.70) scale(1.1 0.82)" fill="#4a2630" fill-opacity="0.85" class="it">m</text><rect x="391.30" y="1351.80" width="7.7" height="6.3" fill="#5b9a47"/><path d="M389.80 1353.30 V1350.70 A2 2 0 0 1 393.80 1350.70 V1352.00" fill="none" stroke="#5b9a47" stroke-width="1.25"/><circle cx="376.10" cy="1380.83" r="8.6" fill="#b26c7c"/><text x="0" y="3.3" font-size="12.5" transform="translate(376.10 1381.73) scale(1.1 0.82)" fill="#4a2630" fill-opacity="0.85" class="it">m</text><rect x="391.30" y="1379.83" width="7.7" height="6.3" fill="#5b9a47"/><path d="M389.80 1381.33 V1378.73 A2 2 0 0 1 393.80 1378.73 V1380.03" fill="none" stroke="#5b9a47" stroke-width="1.25"/><circle cx="376.10" cy="1408.85" r="8.6" fill="#b26c7c"/><text x="0" y="3.3" font-size="12.5" transform="translate(376.10 1409.75) scale(1.1 0.82)" fill="#4a2630" fill-opacity="0.85" class="it">m</text><rect x="391.40" y="1407.75" width="7.7" height="5.9" fill="#c8622a"/><path d="M394.40 1407.95 V1406.05 A1.4 1.4 0 0 1 397.20 1406.05 V1407.95" fill="none" stroke="#c8622a" stroke-width="1.8"/><circle cx="376.10" cy="1436.88" r="8.6" fill="#b26c7c"/><text x="0" y="3.3" font-size="12.5" transform="translate(376.10 1437.78) scale(1.1 0.82)" fill="#4a2630" fill-opacity="0.85" class="it">m</text><rect x="391.40" y="1435.78" width="7.7" height="5.9" fill="#c8622a"/><path d="M394.40 1435.98 V1434.08 A1.4 1.4 0 0 1 397.20 1434.08 V1435.98" fill="none" stroke="#c8622a" stroke-width="1.8"/><circle cx="376.10" cy="1464.91" r="8.6" fill="#b26c7c"/><text x="0" y="3.3" font-size="12.5" transform="translate(376.10 1465.81) scale(1.1 0.82)" fill="#4a2630" fill-opacity="0.85" class="it">m</text><rect x="391.40" y="1463.81" width="7.7" height="5.9" fill="#c8622a"/><path d="M394.40 1464.01 V1462.11 A1.4 1.4 0 0 1 397.20 1462.11 V1464.01" fill="none" stroke="#c8622a" stroke-width="1.8"/><circle cx="376.10" cy="1492.94" r="8.6" fill="#b26c7c"/><text x="0" y="3.3" font-size="12.5" transform="translate(376.10 1493.84) scale(1.1 0.82)" fill="#4a2630" fill-opacity="0.85" class="it">m</text><rect x="391.30" y="1491.94" width="7.7" height="6.3" fill="#5b9a47"/><path d="M389.80 1493.44 V1490.84 A2 2 0 0 1 393.80 1490.84 V1492.14" fill="none" stroke="#5b9a47" stroke-width="1.25"/><circle cx="376.10" cy="1520.96" r="8.6" fill="#b26c7c"/><text x="0" y="3.3" font-size="12.5" transform="translate(376.10 1521.86) scale(1.1 0.82)" fill="#4a2630" fill-opacity="0.85" class="it">m</text><rect x="391.30" y="1519.96" width="7.7" height="6.3" fill="#5b9a47"/><path d="M389.80 1521.46 V1518.86 A2 2 0 0 1 393.80 1518.86 V1520.16" fill="none" stroke="#5b9a47" stroke-width="1.25"/><circle cx="376.10" cy="1548.99" r="8.6" fill="#b26c7c"/><text x="0" y="3.3" font-size="12.5" transform="translate(376.10 1549.89) scale(1.1 0.82)" fill="#4a2630" fill-opacity="0.85" class="it">m</text><rect x="391.30" y="1547.99" width="7.7" height="6.3" fill="#5b9a47"/><path d="M389.80 1549.49 V1546.89 A2 2 0 0 1 393.80 1546.89 V1548.19" fill="none" stroke="#5b9a47" stroke-width="1.25"/><circle cx="376.10" cy="1577.02" r="8.6" fill="#b26c7c"/><text x="0" y="3.3" font-size="12.5" transform="translate(376.10 1577.92) scale(1.1 0.82)" fill="#4a2630" fill-opacity="0.85" class="it">m</text><rect x="391.30" y="1576.02" width="7.7" height="6.3" fill="#5b9a47"/><path d="M389.80 1577.52 V1574.92 A2 2 0 0 1 393.80 1574.92 V1576.22" fill="none" stroke="#5b9a47" stroke-width="1.25"/><circle cx="376.10" cy="1605.05" r="8.6" fill="#b26c7c"/><text x="0" y="3.3" font-size="12.5" transform="translate(376.10 1605.95) scale(1.1 0.82)" fill="#4a2630" fill-opacity="0.85" class="it">m</text><rect x="391.30" y="1604.05" width="7.7" height="6.3" fill="#5b9a47"/><path d="M389.80 1605.55 V1602.95 A2 2 0 0 1 393.80 1602.95 V1604.25" fill="none" stroke="#5b9a47" stroke-width="1.25"/><circle cx="376.10" cy="1633.07" r="8.6" fill="#b26c7c"/><text x="0" y="3.3" font-size="12.5" transform="translate(376.10 1633.97) scale(1.1 0.82)" fill="#4a2630" fill-opacity="0.85" class="it">m</text><rect x="391.30" y="1632.07" width="7.7" height="6.3" fill="#5b9a47"/><path d="M389.80 1633.57 V1630.97 A2 2 0 0 1 393.80 1630.97 V1632.27" fill="none" stroke="#5b9a47" stroke-width="1.25"/><circle cx="376.10" cy="1661.10" r="8.6" fill="#b26c7c"/><text x="0" y="3.3" font-size="12.5" transform="translate(376.10 1662.00) scale(1.1 0.82)" fill="#4a2630" fill-opacity="0.85" class="it">m</text><rect x="391.30" y="1660.10" width="7.7" height="6.3" fill="#5b9a47"/><path d="M389.80 1661.60 V1659.00 A2 2 0 0 1 393.80 1659.00 V1660.30" fill="none" stroke="#5b9a47" stroke-width="1.25"/><circle cx="376.10" cy="1689.20" r="8.6" fill="#b26c7c"/><text x="0" y="3.3" font-size="12.5" transform="translate(376.10 1690.10) scale(1.1 0.82)" fill="#4a2630" fill-opacity="0.85" class="it">m</text><rect x="391.30" y="1688.20" width="7.7" height="6.3" fill="#5b9a47"/><path d="M389.80 1689.70 V1687.10 A2 2 0 0 1 393.80 1687.10 V1688.40" fill="none" stroke="#5b9a47" stroke-width="1.25"/><circle cx="376.10" cy="1718.40" r="8.6" fill="#b26c7c"/><text x="0" y="3.3" font-size="12.5" transform="translate(376.10 1719.30) scale(1.1 0.82)" fill="#4a2630" fill-opacity="0.85" class="it">m</text><path transform="translate(370.50 1723.70)" d="M0 -3.5 L1.8 -1.7 L3.9 0 L1.8 1.8 L0 4.5 L-1.8 1.8 L-4.2 0 L-1.8 -1.7 Z" fill="#9db2bc" fill-opacity="0.92"/><path transform="translate(370.50 1723.70)" d="M0 -1.5 L1.5 0 L0 1.5 L-1.5 0 Z" fill="#c0707f"/><rect x="391.30" y="1717.40" width="7.7" height="6.3" fill="#5b9a47"/><path d="M389.80 1718.90 V1716.30 A2 2 0 0 1 393.80 1716.30 V1717.60" fill="none" stroke="#5b9a47" stroke-width="1.25"/><circle cx="512.10" cy="1810.00" r="8.6" fill="#3f8dab"/><text x="0" y="3.7" font-size="10.5" transform="translate(512.10 1810.20)" fill="#21414f" fill-opacity="0.7" class="it">C</text><rect x="527.80" y="1808.60" width="7.7" height="6.3" fill="#5b9a47"/><path d="M526.30 1810.10 V1807.50 A2 2 0 0 1 530.30 1807.50 V1808.80" fill="none" stroke="#5b9a47" stroke-width="1.25"/><circle cx="511.00" cy="1841.70" r="8.6" fill="#b0893e"/><text x="0" y="4.7" font-size="13.8" transform="translate(510.90 1841.90)" fill="#4d3813" fill-opacity="0.9" class="it">f</text><circle cx="530.20" cy="1842.00" r="2.0" fill="none" stroke="#8495a0" stroke-width="1.7"/><circle cx="511.00" cy="1870.00" r="8.6" fill="#b0893e"/><text x="0" y="4.7" font-size="13.8" transform="translate(510.90 1870.20)" fill="#4d3813" fill-opacity="0.9" class="it">f</text><circle cx="530.20" cy="1870.30" r="2.0" fill="none" stroke="#8495a0" stroke-width="1.7"/><circle cx="511.00" cy="1898.80" r="8.6" fill="#b0893e"/><text x="0" y="4.7" font-size="13.8" transform="translate(510.90 1899.00)" fill="#4d3813" fill-opacity="0.9" class="it">f</text><circle cx="530.20" cy="1899.10" r="2.0" fill="none" stroke="#8495a0" stroke-width="1.7"/><circle cx="511.00" cy="1926.90" r="8.6" fill="#b0893e"/><text x="0" y="4.7" font-size="13.8" transform="translate(510.90 1927.10)" fill="#4d3813" fill-opacity="0.9" class="it">f</text><circle cx="530.20" cy="1927.20" r="2.0" fill="none" stroke="#8495a0" stroke-width="1.7"/><circle cx="511.00" cy="1954.93" r="8.6" fill="#b0893e"/><text x="0" y="4.7" font-size="13.8" transform="translate(510.90 1955.13)" fill="#4d3813" fill-opacity="0.9" class="it">f</text><circle cx="530.20" cy="1955.23" r="2.0" fill="none" stroke="#8495a0" stroke-width="1.7"/><circle cx="511.00" cy="1982.95" r="8.6" fill="#b0893e"/><text x="0" y="4.7" font-size="13.8" transform="translate(510.90 1983.15)" fill="#4d3813" fill-opacity="0.9" class="it">f</text><circle cx="530.20" cy="1983.25" r="2.0" fill="none" stroke="#8495a0" stroke-width="1.7"/><circle cx="511.00" cy="2010.96" r="8.6" fill="#b0893e"/><text x="0" y="4.7" font-size="13.8" transform="translate(510.90 2011.16)" fill="#4d3813" fill-opacity="0.9" class="it">f</text><circle cx="530.20" cy="2011.26" r="2.0" fill="none" stroke="#8495a0" stroke-width="1.7"/><circle cx="511.00" cy="2038.97" r="8.6" fill="#b0893e"/><text x="0" y="4.7" font-size="13.8" transform="translate(510.90 2039.17)" fill="#4d3813" fill-opacity="0.9" class="it">f</text><circle cx="530.20" cy="2039.27" r="2.0" fill="none" stroke="#8495a0" stroke-width="1.7"/><circle cx="511.00" cy="2066.99" r="8.6" fill="#b0893e"/><text x="0" y="4.7" font-size="13.8" transform="translate(510.90 2067.19)" fill="#4d3813" fill-opacity="0.9" class="it">f</text><circle cx="530.20" cy="2067.29" r="2.0" fill="none" stroke="#8495a0" stroke-width="1.7"/><circle cx="511.00" cy="2095.00" r="8.6" fill="#b0893e"/><text x="0" y="4.7" font-size="13.8" transform="translate(510.90 2095.20)" fill="#4d3813" fill-opacity="0.9" class="it">f</text><circle cx="530.20" cy="2095.30" r="2.0" fill="none" stroke="#8495a0" stroke-width="1.7"/><circle cx="511.00" cy="2124.60" r="8.6" fill="#b26c7c"/><text x="0" y="3.3" font-size="12.5" transform="translate(511.00 2125.50) scale(1.1 0.82)" fill="#4a2630" fill-opacity="0.85" class="it">m</text><rect x="526.20" y="2123.60" width="7.7" height="6.3" fill="#5b9a47"/><path d="M524.70 2125.10 V2122.50 A2 2 0 0 1 528.70 2122.50 V2123.80" fill="none" stroke="#5b9a47" stroke-width="1.25"/><circle cx="511.00" cy="2154.00" r="8.6" fill="#b26c7c"/><text x="0" y="3.3" font-size="12.5" transform="translate(511.00 2154.90) scale(1.1 0.82)" fill="#4a2630" fill-opacity="0.85" class="it">m</text><rect x="526.30" y="2152.90" width="7.7" height="5.9" fill="#c8622a"/><path d="M529.30 2153.10 V2151.20 A1.4 1.4 0 0 1 532.10 2151.20 V2153.10" fill="none" stroke="#c8622a" stroke-width="1.8"/><circle cx="511.00" cy="2181.87" r="8.6" fill="#b26c7c"/><text x="0" y="3.3" font-size="12.5" transform="translate(511.00 2182.77) scale(1.1 0.82)" fill="#4a2630" fill-opacity="0.85" class="it">m</text><path transform="translate(505.40 2187.17)" d="M0 -3.5 L1.8 -1.7 L3.9 0 L1.8 1.8 L0 4.5 L-1.8 1.8 L-4.2 0 L-1.8 -1.7 Z" fill="#9db2bc" fill-opacity="0.92"/><path transform="translate(505.40 2187.17)" d="M0 -1.5 L1.5 0 L0 1.5 L-1.5 0 Z" fill="#c0707f"/><rect x="526.30" y="2180.77" width="7.7" height="5.9" fill="#c8622a"/><path d="M529.30 2180.97 V2179.07 A1.4 1.4 0 0 1 532.10 2179.07 V2180.97" fill="none" stroke="#c8622a" stroke-width="1.8"/><circle cx="511.00" cy="2209.73" r="8.6" fill="#b26c7c"/><text x="0" y="3.3" font-size="12.5" transform="translate(511.00 2210.63) scale(1.1 0.82)" fill="#4a2630" fill-opacity="0.85" class="it">m</text><path transform="translate(505.40 2215.03)" d="M0 -3.5 L1.8 -1.7 L3.9 0 L1.8 1.8 L0 4.5 L-1.8 1.8 L-4.2 0 L-1.8 -1.7 Z" fill="#9db2bc" fill-opacity="0.92"/><path transform="translate(505.40 2215.03)" d="M0 -1.5 L1.5 0 L0 1.5 L-1.5 0 Z" fill="#c0707f"/><rect x="526.30" y="2208.63" width="7.7" height="5.9" fill="#c8622a"/><path d="M529.30 2208.83 V2206.93 A1.4 1.4 0 0 1 532.10 2206.93 V2208.83" fill="none" stroke="#c8622a" stroke-width="1.8"/><circle cx="511.00" cy="2237.60" r="8.6" fill="#b26c7c"/><text x="0" y="3.3" font-size="12.5" transform="translate(511.00 2238.50) scale(1.1 0.82)" fill="#4a2630" fill-opacity="0.85" class="it">m</text><rect x="526.20" y="2236.60" width="7.7" height="6.3" fill="#5b9a47"/><path d="M524.70 2238.10 V2235.50 A2 2 0 0 1 528.70 2235.50 V2236.80" fill="none" stroke="#5b9a47" stroke-width="1.25"/><circle cx="511.00" cy="2265.60" r="8.6" fill="#b26c7c"/><text x="0" y="3.3" font-size="12.5" transform="translate(511.00 2266.50) scale(1.1 0.82)" fill="#4a2630" fill-opacity="0.85" class="it">m</text><rect x="526.20" y="2264.60" width="7.7" height="6.3" fill="#5b9a47"/><path d="M524.70 2266.10 V2263.50 A2 2 0 0 1 528.70 2263.50 V2264.80" fill="none" stroke="#5b9a47" stroke-width="1.25"/><circle cx="511.00" cy="2293.78" r="8.6" fill="#b26c7c"/><text x="0" y="3.3" font-size="12.5" transform="translate(511.00 2294.68) scale(1.1 0.82)" fill="#4a2630" fill-opacity="0.85" class="it">m</text><rect x="526.20" y="2292.78" width="7.7" height="6.3" fill="#5b9a47"/><path d="M524.70 2294.28 V2291.68 A2 2 0 0 1 528.70 2291.68 V2292.97" fill="none" stroke="#5b9a47" stroke-width="1.25"/><circle cx="511.00" cy="2321.95" r="8.6" fill="#b26c7c"/><text x="0" y="3.3" font-size="12.5" transform="translate(511.00 2322.85) scale(1.1 0.82)" fill="#4a2630" fill-opacity="0.85" class="it">m</text><rect x="526.20" y="2320.95" width="7.7" height="6.3" fill="#5b9a47"/><path d="M524.70 2322.45 V2319.85 A2 2 0 0 1 528.70 2319.85 V2321.15" fill="none" stroke="#5b9a47" stroke-width="1.25"/><circle cx="511.00" cy="2350.12" r="8.6" fill="#b26c7c"/><text x="0" y="3.3" font-size="12.5" transform="translate(511.00 2351.03) scale(1.1 0.82)" fill="#4a2630" fill-opacity="0.85" class="it">m</text><rect x="526.20" y="2349.12" width="7.7" height="6.3" fill="#5b9a47"/><path d="M524.70 2350.62 V2348.03 A2 2 0 0 1 528.70 2348.03 V2349.32" fill="none" stroke="#5b9a47" stroke-width="1.25"/><circle cx="511.00" cy="2378.30" r="8.6" fill="#b26c7c"/><text x="0" y="3.3" font-size="12.5" transform="translate(511.00 2379.20) scale(1.1 0.82)" fill="#4a2630" fill-opacity="0.85" class="it">m</text><rect x="526.20" y="2377.30" width="7.7" height="6.3" fill="#5b9a47"/><path d="M524.70 2378.80 V2376.20 A2 2 0 0 1 528.70 2376.20 V2377.50" fill="none" stroke="#5b9a47" stroke-width="1.25"/>
<path d="M367.50 1104.00 L367.50 1078.45 L-5.00 1078.45" class="ds"/><path d="M383.50 1104.00 L383.50 1066.20 L24.30 1066.20 L24.30 874.20" class="ds"/><path d="M18.00 883.80 L24.30 874.20 L30.60 883.80" class="s"/><path d="M72.40 874.20 L72.40 1053.95 L399.50 1053.95 L399.50 1104.00" class="ds"/><path d="M393.20 1094.40 L399.50 1104.00 L405.80 1094.40" class="s"/><path d="M120.00 890.20 L120.00 1041.70 L415.50 1041.70 L415.50 1104.00" class="s"/><path d="M409.20 1094.40 L415.50 1104.00 L421.80 1094.40" class="s"/><path d="M120.00 874.20 L126.10 882.30 L120.00 890.40 L113.90 882.30 Z" class="d"/><path d="M431.50 1104.00 L431.50 1029.45 L195.50 1029.45 L195.50 944.00" class="ds"/><path d="M189.20 953.60 L195.50 944.00 L201.80 953.60" class="s"/><path d="M447.50 1104.00 L447.50 1017.20 L250.50 1017.20 L250.50 944.00" class="ds"/><path d="M244.20 953.60 L250.50 944.00 L256.80 953.60" class="s"/><path d="M305.60 960.00 L305.60 1004.95 L463.50 1004.95 L463.50 1104.00" class="s"/><path d="M457.20 1094.40 L463.50 1104.00 L469.80 1094.40" class="s"/><path d="M305.60 944.00 L311.70 952.10 L305.60 960.20 L299.50 952.10 Z" class="d"/><path d="M360.20 944.00 L360.20 992.70 L479.50 992.70 L479.50 1104.00" class="ds"/><path d="M473.20 1094.40 L479.50 1104.00 L485.80 1094.40" class="s"/><path d="M400.50 619.00 L400.50 980.45 L495.50 980.45 L495.50 1104.00" class="ds"/><path d="M489.20 1094.40 L495.50 1104.00 L501.80 1094.40" class="s"/><path d="M501.50 635.00 L501.50 649.50 L486.50 649.50 L486.50 968.20 L511.50 968.20 L511.50 1104.00" class="s"/><path d="M505.20 1094.40 L511.50 1104.00 L517.80 1094.40" class="s"/><path d="M501.50 619.00 L507.60 627.10 L501.50 635.20 L495.40 627.10 Z" class="d"/><path d="M527.50 1104.00 L527.50 968.20 L625.20 968.20 L625.20 944.00" class="ds"/><path d="M618.90 953.60 L625.20 944.00 L631.50 953.60" class="s"/><path d="M543.50 1104.00 L543.50 980.45 L679.70 980.45 L679.70 944.00" class="ds"/><path d="M673.40 953.60 L679.70 944.00 L686.00 953.60" class="s"/><path d="M734.40 960.00 L734.40 992.70 L559.50 992.70 L559.50 1104.00" class="s"/><path d="M553.20 1094.40 L559.50 1104.00 L565.80 1094.40" class="s"/><path d="M734.40 944.00 L740.50 952.10 L734.40 960.20 L728.30 952.10 Z" class="d"/><path d="M789.30 944.00 L789.30 1004.95 L575.50 1004.95 L575.50 1104.00" class="ds"/><path d="M569.20 1094.40 L575.50 1104.00 L581.80 1094.40" class="s"/><path d="M829.80 619.00 L829.80 1017.20 L591.50 1017.20 L591.50 1104.00" class="ds"/><path d="M585.20 1094.40 L591.50 1104.00 L597.80 1094.40" class="s"/><path d="M930.40 635.00 L930.40 649.50 L843.70 649.50 L843.70 1029.45 L607.50 1029.45 L607.50 1104.00" class="s"/><path d="M601.20 1094.40 L607.50 1104.00 L613.80 1094.40" class="s"/><path d="M930.40 619.00 L936.50 627.10 L930.40 635.20 L924.30 627.10 Z" class="d"/><path d="M623.50 1104.00 L623.50 1041.70 L874.60 1041.70 L874.60 944.00" class="ds"/><path d="M868.30 953.60 L874.60 944.00 L880.90 953.60" class="s"/><path d="M639.50 1104.00 L639.50 1053.95 L911.30 1053.95 L911.30 944.00" class="ds"/><path d="M905.00 953.60 L911.30 944.00 L917.60 953.60" class="s"/><path d="M947.80 960.00 L947.80 1066.20 L655.50 1066.20 L655.50 1104.00" class="s"/><path d="M649.20 1094.40 L655.50 1104.00 L661.80 1094.40" class="s"/><path d="M947.80 944.00 L953.90 952.10 L947.80 960.20 L941.70 952.10 Z" class="d"/><path d="M984.40 944.00 L984.40 1078.45 L671.50 1078.45 L671.50 1104.00" class="ds"/><path d="M665.20 1094.40 L671.50 1104.00 L677.80 1094.40" class="s"/><path d="M1021.40 944.00 L1021.40 1065.80 L995.50 1065.80 L995.50 1757.20 L746.40 1757.20 L746.40 1792.40" class="ds"/><path d="M740.10 1782.80 L746.40 1792.40 L752.70 1782.80" class="s"/><path d="M1057.70 944.00 L1057.70 1078.45 L1009.50 1078.45 L1009.50 1769.50 L847.30 1769.50 L847.30 1792.40" class="ds"/><path d="M841.00 1782.80 L847.30 1792.40 L853.60 1782.80" class="s"/><path d="M223.50 680.50 L223.50 649.50 L198.50 649.50 L198.50 619.00" class="ds"/><path d="M192.20 628.60 L198.50 619.00 L204.80 628.60" class="s"/><path d="M333.50 680.50 L333.50 649.50 L299.50 649.50 L299.50 619.00" class="ds"/><path d="M293.20 628.60 L299.50 619.00 L305.80 628.60" class="s"/><path d="M651.30 680.50 L651.30 649.50 L626.40 649.50 L626.40 619.00" class="ds"/><path d="M620.10 628.60 L626.40 619.00 L632.70 628.60" class="s"/><path d="M762.30 680.50 L762.30 649.50 L728.20 649.50 L728.20 619.00" class="ds"/><path d="M721.90 628.60 L728.20 619.00 L734.50 628.60" class="s"/><path d="M545.50 1776.40 L545.50 1769.50 L439.60 1769.50 L439.60 1732.20" class="s"/><path d="M433.30 1741.80 L439.60 1732.20 L445.90 1741.80" class="s"/><path d="M545.50 1776.20 L551.60 1784.30 L545.50 1792.40 L539.40 1784.30 Z" class="d"/><path d="M646.20 1792.40 L646.20 1769.50 L599.40 1769.50 L599.40 1732.20" class="ds"/><path d="M593.10 1741.80 L599.40 1732.20 L605.70 1741.80" class="s"/></svg>
<span class="t" style="left:198.3px;top:23.2px;letter-spacing:0.100px">SchedulerC</span><span class="t" style="left:197.1px;top:54.9px;letter-spacing:0.929px">tofloor</span><span class="ty" style="left:464.3px;width:80.0px;top:54.9px;letter-spacing:0.308px">int</span><span class="t" style="left:197.1px;top:82.9px;letter-spacing:0.709px">floor</span><span class="ty" style="left:464.3px;width:80.0px;top:82.9px;letter-spacing:0.308px">int</span><span class="t" style="left:197.1px;top:110.9px;letter-spacing:0.298px">queue</span><span class="ty" style="left:467.1px;width:80.0px;top:110.9px;letter-spacing:0.109px">Request</span><span class="t" style="left:197.1px;top:139.0px;letter-spacing:0.598px;width:74.4px">arrivefloor</span><span class="ty" style="left:464.6px;width:80.0px;top:139.0px;letter-spacing:0.623px">int[]</span><span class="t" style="left:197.1px;top:167.0px;letter-spacing:0.545px">id_floor</span><span class="ty" style="left:466.5px;width:80.0px;top:167.0px;letter-spacing:0.511px">String[]</span><span class="t" style="left:197.1px;top:195.0px;letter-spacing:0.500px">request</span><span class="ty" style="left:465.9px;width:80.0px;top:195.0px;letter-spacing:0.367px">String</span><span class="t" style="left:197.1px;top:223.0px;letter-spacing:0.429px">HaveOpenMark</span><span class="ty" style="left:464.3px;width:80.0px;top:223.0px;letter-spacing:0.308px">int</span><span class="t" style="left:197.1px;top:251.1px;letter-spacing:0.528px">exitmark</span><span class="ty" style="left:464.3px;width:80.0px;top:251.1px;letter-spacing:0.308px">int</span><span class="t" style="left:197.1px;top:279.1px;letter-spacing:0.401px">maxperson</span><span class="ty" style="left:464.3px;width:80.0px;top:279.1px;letter-spacing:0.308px">int</span><span class="t" style="left:197.1px;top:307.1px;letter-spacing:0.608px;width:80.3px">nowperson</span><span class="ty" style="left:464.3px;width:80.0px;top:307.1px;letter-spacing:0.308px">int</span><span class="t" style="left:197.1px;top:336.6px;letter-spacing:0.286px;width:319.0px">SchedulerC(int, int[], String[], Request, String</span><span class="t" style="left:197.1px;top:366.2px;letter-spacing:0.388px;width:180.1px">ifOnStopFloorOfC(String)</span><span class="ty" style="left:464.3px;width:80.0px;top:366.2px;letter-spacing:0.308px">int</span><span class="t" style="left:197.1px;top:394.2px;letter-spacing:0.584px;width:119.6px">remove(int[], int)</span><span class="ty" style="left:464.6px;width:80.0px;top:394.2px;letter-spacing:0.623px">int[]</span><span class="t" style="left:197.1px;top:422.2px;letter-spacing:0.445px">remove(String[], String</span><span class="ty" style="left:466.5px;width:80.0px;top:422.2px;letter-spacing:0.511px">String[]</span><span class="t" style="left:197.1px;top:450.2px;letter-spacing:0.516px">add(int[], int)</span><span class="ty" style="left:464.6px;width:80.0px;top:450.2px;letter-spacing:0.623px">int[]</span><span class="t" style="left:197.1px;top:478.2px;letter-spacing:0.447px;width:168.2px">add(String[], String, int)</span><span class="ty" style="left:466.5px;width:80.0px;top:478.2px;letter-spacing:0.511px">String[]</span><span class="t" style="left:197.1px;top:506.3px;letter-spacing:0.749px">getid(int)</span><span class="ty" style="left:465.9px;width:80.0px;top:506.3px;letter-spacing:0.367px">String</span><span class="t" style="left:197.1px;top:534.3px;letter-spacing:0.319px">checkOnway(int, int)</span><span class="ty" style="left:464.3px;width:80.0px;top:534.3px;letter-spacing:0.308px">int</span><span class="t" style="left:197.1px;top:562.3px;letter-spacing:0.364px;width:142.1px">calculate(int, String)</span><span class="ty" style="left:464.3px;width:80.0px;top:562.3px;letter-spacing:0.308px">int</span><span class="t" style="left:197.1px;top:590.3px;letter-spacing:0.193px">run()</span><span class="ty" style="left:466.0px;width:80.0px;top:590.3px;letter-spacing:0.516px">void</span>
<span class="t" style="left:626.3px;top:23.2px;letter-spacing:0.186px">SchedulerA</span><span class="t" style="left:625.1px;top:54.9px;letter-spacing:0.929px">tofloor</span><span class="ty" style="left:893.4px;width:80.0px;top:54.9px;letter-spacing:0.308px">int</span><span class="t" style="left:625.1px;top:82.9px;letter-spacing:0.709px">floor</span><span class="ty" style="left:893.4px;width:80.0px;top:82.9px;letter-spacing:0.308px">int</span><span class="t" style="left:625.1px;top:110.9px;letter-spacing:0.298px">queue</span><span class="ty" style="left:896.2px;width:80.0px;top:110.9px;letter-spacing:0.109px">Request</span><span class="t" style="left:625.1px;top:139.0px;letter-spacing:0.598px;width:74.4px">arrivefloor</span><span class="ty" style="left:893.7px;width:80.0px;top:139.0px;letter-spacing:0.623px">int[]</span><span class="t" style="left:625.1px;top:167.0px;letter-spacing:0.545px">id_floor</span><span class="ty" style="left:895.6px;width:80.0px;top:167.0px;letter-spacing:0.511px">String[]</span><span class="t" style="left:625.1px;top:195.0px;letter-spacing:0.500px">request</span><span class="ty" style="left:895.0px;width:80.0px;top:195.0px;letter-spacing:0.367px">String</span><span class="t" style="left:625.1px;top:223.0px;letter-spacing:0.429px">HaveOpenMark</span><span class="ty" style="left:893.4px;width:80.0px;top:223.0px;letter-spacing:0.308px">int</span><span class="t" style="left:625.1px;top:251.1px;letter-spacing:0.528px">exitmark</span><span class="ty" style="left:893.4px;width:80.0px;top:251.1px;letter-spacing:0.308px">int</span><span class="t" style="left:625.1px;top:279.1px;letter-spacing:0.401px">maxperson</span><span class="ty" style="left:893.4px;width:80.0px;top:279.1px;letter-spacing:0.308px">int</span><span class="t" style="left:625.1px;top:307.1px;letter-spacing:0.608px;width:80.3px">nowperson</span><span class="ty" style="left:893.4px;width:80.0px;top:307.1px;letter-spacing:0.308px">int</span><span class="t" style="left:625.1px;top:336.6px;letter-spacing:0.303px;width:319.0px">SchedulerA(int, int[], String[], Request, String</span><span class="t" style="left:625.1px;top:366.2px;letter-spacing:0.435px">ifOnStopFloorOfA(String</span><span class="ty" style="left:893.4px;width:80.0px;top:366.2px;letter-spacing:0.308px">int</span><span class="t" style="left:625.1px;top:394.2px;letter-spacing:0.584px;width:119.6px">remove(int[], int)</span><span class="ty" style="left:893.7px;width:80.0px;top:394.2px;letter-spacing:0.623px">int[]</span><span class="t" style="left:625.1px;top:422.2px;letter-spacing:0.445px">remove(String[], String</span><span class="ty" style="left:895.6px;width:80.0px;top:422.2px;letter-spacing:0.511px">String[]</span><span class="t" style="left:625.1px;top:450.2px;letter-spacing:0.516px">add(int[], int)</span><span class="ty" style="left:893.7px;width:80.0px;top:450.2px;letter-spacing:0.623px">int[]</span><span class="t" style="left:625.1px;top:478.2px;letter-spacing:0.447px;width:168.2px">add(String[], String, int)</span><span class="ty" style="left:895.6px;width:80.0px;top:478.2px;letter-spacing:0.511px">String[]</span><span class="t" style="left:625.1px;top:506.3px;letter-spacing:0.749px">getid(int)</span><span class="ty" style="left:895.0px;width:80.0px;top:506.3px;letter-spacing:0.367px">String</span><span class="t" style="left:625.1px;top:534.3px;letter-spacing:0.319px">checkOnway(int, int)</span><span class="ty" style="left:893.4px;width:80.0px;top:534.3px;letter-spacing:0.308px">int</span><span class="t" style="left:625.1px;top:562.3px;letter-spacing:0.364px;width:142.1px">calculate(int, String)</span><span class="ty" style="left:893.4px;width:80.0px;top:562.3px;letter-spacing:0.308px">int</span><span class="t" style="left:625.1px;top:590.3px;letter-spacing:0.193px">run()</span><span class="ty" style="left:895.1px;width:80.0px;top:590.3px;letter-spacing:0.516px">void</span>
<span class="t" style="left:219.5px;top:684.5px;letter-spacing:0.295px">elevatorC</span><span class="t" style="left:218.3px;top:715.9px;letter-spacing:0.298px">queue</span><span class="ty" style="left:303.4px;width:80.0px;top:715.9px;letter-spacing:0.109px">Request</span><span class="t" style="left:218.3px;top:744.8px;letter-spacing:0.598px;width:73.6px">arrivefloor</span><span class="ty" style="left:300.9px;width:80.0px;top:744.8px;letter-spacing:0.623px">int[]</span><span class="t" style="left:218.3px;top:773.0px;letter-spacing:0.545px">id_floor</span><span class="ty" style="left:302.8px;width:80.0px;top:773.0px;letter-spacing:0.511px">String[]</span><span class="t" style="left:218.3px;top:800.9px;letter-spacing:0.388px">HaveOpenMark</span><span class="ty" style="left:300.6px;width:80.0px;top:800.9px;letter-spacing:0.308px">int</span><span class="t" style="left:218.3px;top:828.8px;letter-spacing:0.528px">exitmark</span><span class="ty" style="left:300.6px;width:80.0px;top:828.8px;letter-spacing:0.308px">int</span><span class="t" style="left:218.3px;top:856.8px;letter-spacing:0.709px">floor</span><span class="ty" style="left:300.6px;width:80.0px;top:856.8px;letter-spacing:0.308px">int</span><span class="t" style="left:218.3px;top:886.3px;letter-spacing:0.292px">elevatorC(Request</span><span class="t" style="left:218.3px;top:915.8px;letter-spacing:0.193px">run()</span><span class="ty" style="left:302.3px;width:80.0px;top:915.8px;letter-spacing:0.516px">void</span>
<span class="t" style="left:648.3px;top:684.5px;letter-spacing:0.391px">elevatorA</span><span class="t" style="left:647.1px;top:715.9px;letter-spacing:0.298px">queue</span><span class="ty" style="left:732.2px;width:80.0px;top:715.9px;letter-spacing:0.109px">Request</span><span class="t" style="left:647.1px;top:744.8px;letter-spacing:0.598px;width:73.6px">arrivefloor</span><span class="ty" style="left:729.7px;width:80.0px;top:744.8px;letter-spacing:0.623px">int[]</span><span class="t" style="left:647.1px;top:773.0px;letter-spacing:0.545px">id_floor</span><span class="ty" style="left:731.6px;width:80.0px;top:773.0px;letter-spacing:0.511px">String[]</span><span class="t" style="left:647.1px;top:800.9px;letter-spacing:0.388px">HaveOpenMark</span><span class="ty" style="left:729.4px;width:80.0px;top:800.9px;letter-spacing:0.308px">int</span><span class="t" style="left:647.1px;top:828.8px;letter-spacing:0.528px">exitmark</span><span class="ty" style="left:729.4px;width:80.0px;top:828.8px;letter-spacing:0.308px">int</span><span class="t" style="left:647.1px;top:856.8px;letter-spacing:0.709px">floor</span><span class="ty" style="left:729.4px;width:80.0px;top:856.8px;letter-spacing:0.308px">int</span><span class="t" style="left:647.1px;top:886.3px;letter-spacing:0.343px">elevatorA(Request</span><span class="t" style="left:647.1px;top:915.8px;letter-spacing:0.193px">run()</span><span class="ty" style="left:731.1px;width:80.0px;top:915.8px;letter-spacing:0.516px">void</span>
<span class="t" style="left:907.5px;top:684.5px;letter-spacing:0.391px">elevatorB</span><span class="t" style="left:906.3px;top:715.9px;letter-spacing:0.298px">queue</span><span class="ty" style="left:991.1px;width:80.0px;top:715.9px;letter-spacing:0.109px">Request</span><span class="t" style="left:906.3px;top:744.8px;letter-spacing:0.598px;width:73.6px">arrivefloor</span><span class="ty" style="left:988.6px;width:80.0px;top:744.8px;letter-spacing:0.623px">int[]</span><span class="t" style="left:906.3px;top:773.0px;letter-spacing:0.545px">id_floor</span><span class="ty" style="left:990.5px;width:80.0px;top:773.0px;letter-spacing:0.511px">String[]</span><span class="t" style="left:906.3px;top:800.9px;letter-spacing:0.388px">HaveOpenMark</span><span class="ty" style="left:988.3px;width:80.0px;top:800.9px;letter-spacing:0.308px">int</span><span class="t" style="left:906.3px;top:828.8px;letter-spacing:0.528px">exitmark</span><span class="ty" style="left:988.3px;width:80.0px;top:828.8px;letter-spacing:0.308px">int</span><span class="t" style="left:906.3px;top:856.8px;letter-spacing:0.709px">floor</span><span class="ty" style="left:988.3px;width:80.0px;top:856.8px;letter-spacing:0.308px">int</span><span class="t" style="left:906.3px;top:886.3px;letter-spacing:0.331px;width:136.2px">elevatorB(Request)</span><span class="t" style="left:906.3px;top:915.8px;letter-spacing:0.193px">run()</span><span class="ty" style="left:990.0px;width:80.0px;top:915.8px;letter-spacing:0.516px">void</span>
<span class="t" style="left:3.2px;top:755.1px;letter-spacing:0.423px;color:#5b93d2">Input</span><span class="t" style="left:2.0px;top:786.9px;letter-spacing:0.298px">queue</span><span class="ty" style="left:59.4px;width:80.0px;top:786.9px;letter-spacing:0.109px">Request</span><span class="t" style="left:2.0px;top:815.8px;letter-spacing:0.283px">Input(Request)</span><span class="t" style="left:2.0px;top:844.9px;letter-spacing:0.053px">run()</span><span class="ty" style="left:58.3px;width:80.0px;top:844.9px;letter-spacing:0.516px">void</span>
<span class="t" style="left:410.5px;top:1107.4px;letter-spacing:0.181px">Request</span><span class="t" style="left:409.3px;top:1138.6px;letter-spacing:-0.053px">i</span><span class="ty" style="left:591.5px;width:80.0px;top:1138.6px;letter-spacing:0.308px">int</span><span class="t" style="left:409.3px;top:1167.4px;letter-spacing:0.141px">markA</span><span class="ty" style="left:591.5px;width:80.0px;top:1167.4px;letter-spacing:0.308px">int</span><span class="t" style="left:409.3px;top:1195.6px;letter-spacing:-0.199px">markB</span><span class="ty" style="left:591.5px;width:80.0px;top:1195.6px;letter-spacing:0.308px">int</span><span class="t" style="left:409.3px;top:1223.9px;letter-spacing:-0.268px">markC</span><span class="ty" style="left:591.5px;width:80.0px;top:1223.9px;letter-spacing:0.308px">int</span><span class="t" style="left:409.3px;top:1252.0px;letter-spacing:0.298px">queue</span><span class="ty" style="left:593.7px;width:80.0px;top:1252.0px;letter-spacing:0.511px">String[]</span><span class="t" style="left:409.3px;top:1281.0px;letter-spacing:0.311px;width:146.0px">Request(String[], int)</span><span class="t" style="left:409.3px;top:1309.9px;letter-spacing:0.502px">getqueue()</span><span class="ty" style="left:593.7px;width:80.0px;top:1309.9px;letter-spacing:0.511px">String[]</span><span class="t" style="left:409.3px;top:1338.8px;letter-spacing:0.187px">clone()</span><span class="ty" style="left:594.0px;width:80.0px;top:1338.8px;letter-spacing:0.498px">Object</span><span class="t" style="left:409.3px;top:1366.8px;letter-spacing:0.298px">changeMark()</span><span class="ty" style="left:593.2px;width:80.0px;top:1366.8px;letter-spacing:0.516px">void</span><span class="t" style="left:409.3px;top:1394.9px;letter-spacing:0.435px">ifOnStopFloorOfA(String</span><span class="ty" style="left:591.5px;width:80.0px;top:1394.9px;letter-spacing:0.308px">int</span><span class="t" style="left:409.3px;top:1422.9px;letter-spacing:0.368px;width:178.8px">ifOnStopFloorOfB(String)</span><span class="ty" style="left:591.5px;width:80.0px;top:1422.9px;letter-spacing:0.308px">int</span><span class="t" style="left:409.3px;top:1450.9px;letter-spacing:0.354px;width:179.3px">ifOnStopFloorOfC(String)</span><span class="ty" style="left:591.5px;width:80.0px;top:1450.9px;letter-spacing:0.308px">int</span><span class="t" style="left:409.3px;top:1478.9px;letter-spacing:0.419px">changeRequestAnolegal(</span><span class="ty" style="left:593.7px;width:80.0px;top:1478.9px;letter-spacing:0.511px">String[]</span><span class="t" style="left:409.3px;top:1507.0px;letter-spacing:0.287px">changeRequestBnolegal(</span><span class="ty" style="left:593.7px;width:80.0px;top:1507.0px;letter-spacing:0.511px">String[]</span><span class="t" style="left:409.3px;top:1535.0px;letter-spacing:0.357px">changeRequestCnolegal(</span><span class="ty" style="left:593.7px;width:80.0px;top:1535.0px;letter-spacing:0.511px">String[]</span><span class="t" style="left:409.3px;top:1563.0px;letter-spacing:0.328px;width:130.7px">changeRequestA()</span><span class="ty" style="left:593.1px;width:80.0px;top:1563.0px;letter-spacing:0.367px">String</span><span class="t" style="left:409.3px;top:1591.0px;letter-spacing:0.266px;width:130.0px">changeRequestB()</span><span class="ty" style="left:593.1px;width:80.0px;top:1591.0px;letter-spacing:0.367px">String</span><span class="t" style="left:409.3px;top:1619.1px;letter-spacing:0.193px;width:129.4px">changeRequestC()</span><span class="ty" style="left:593.1px;width:80.0px;top:1619.1px;letter-spacing:0.367px">String</span><span class="t" style="left:409.3px;top:1647.1px;letter-spacing:0.290px;width:162.4px">changeRequest(String)</span><span class="ty" style="left:593.2px;width:80.0px;top:1647.1px;letter-spacing:0.516px">void</span><span class="t" style="left:409.3px;top:1675.2px;letter-spacing:0.323px">changeRequest(String, int</span><span class="ty" style="left:593.2px;width:80.0px;top:1675.2px;letter-spacing:0.516px">void</span><span class="t" style="left:409.3px;top:1704.4px;letter-spacing:0.348px">main(String[])</span><span class="ty" style="left:593.2px;width:80.0px;top:1704.4px;letter-spacing:0.516px">void</span>
<span class="t" style="left:545.4px;top:1796.4px;letter-spacing:0.186px">SchedulerB</span><span class="t" style="left:544.2px;top:1827.7px;letter-spacing:0.929px">tofloor</span><span class="ty" style="left:809.5px;width:80.0px;top:1827.7px;letter-spacing:0.308px">int</span><span class="t" style="left:544.2px;top:1856.0px;letter-spacing:0.709px">floor</span><span class="ty" style="left:809.5px;width:80.0px;top:1856.0px;letter-spacing:0.308px">int</span><span class="t" style="left:544.2px;top:1884.8px;letter-spacing:0.298px">queue</span><span class="ty" style="left:812.3px;width:80.0px;top:1884.8px;letter-spacing:0.109px">Request</span><span class="t" style="left:544.2px;top:1912.9px;letter-spacing:0.598px;width:74.4px">arrivefloor</span><span class="ty" style="left:809.8px;width:80.0px;top:1912.9px;letter-spacing:0.623px">int[]</span><span class="t" style="left:544.2px;top:1940.9px;letter-spacing:0.545px">id_floor</span><span class="ty" style="left:811.7px;width:80.0px;top:1940.9px;letter-spacing:0.511px">String[]</span><span class="t" style="left:544.2px;top:1969.0px;letter-spacing:0.500px">request</span><span class="ty" style="left:811.1px;width:80.0px;top:1969.0px;letter-spacing:0.367px">String</span><span class="t" style="left:544.2px;top:1997.0px;letter-spacing:0.429px">HaveOpenMark</span><span class="ty" style="left:809.5px;width:80.0px;top:1997.0px;letter-spacing:0.308px">int</span><span class="t" style="left:544.2px;top:2025.0px;letter-spacing:0.528px">exitmark</span><span class="ty" style="left:809.5px;width:80.0px;top:2025.0px;letter-spacing:0.308px">int</span><span class="t" style="left:544.2px;top:2053.0px;letter-spacing:0.401px">maxperson</span><span class="ty" style="left:809.5px;width:80.0px;top:2053.0px;letter-spacing:0.308px">int</span><span class="t" style="left:544.2px;top:2081.0px;letter-spacing:0.608px;width:80.3px">nowperson</span><span class="ty" style="left:809.5px;width:80.0px;top:2081.0px;letter-spacing:0.308px">int</span><span class="t" style="left:544.2px;top:2110.6px;letter-spacing:0.303px;width:319.0px">SchedulerB(int, int[], String[], Request, String</span><span class="t" style="left:544.2px;top:2140.0px;letter-spacing:0.423px;width:180.1px">ifOnStopFloorOfB(String)</span><span class="ty" style="left:809.5px;width:80.0px;top:2140.0px;letter-spacing:0.308px">int</span><span class="t" style="left:544.2px;top:2167.9px;letter-spacing:0.584px;width:119.6px">remove(int[], int)</span><span class="ty" style="left:809.8px;width:80.0px;top:2167.9px;letter-spacing:0.623px">int[]</span><span class="t" style="left:544.2px;top:2195.7px;letter-spacing:0.445px">remove(String[], String</span><span class="ty" style="left:811.7px;width:80.0px;top:2195.7px;letter-spacing:0.511px">String[]</span><span class="t" style="left:544.2px;top:2223.6px;letter-spacing:0.516px">add(int[], int)</span><span class="ty" style="left:809.8px;width:80.0px;top:2223.6px;letter-spacing:0.623px">int[]</span><span class="t" style="left:544.2px;top:2251.6px;letter-spacing:0.447px;width:168.2px">add(String[], String, int)</span><span class="ty" style="left:811.7px;width:80.0px;top:2251.6px;letter-spacing:0.511px">String[]</span><span class="t" style="left:544.2px;top:2279.8px;letter-spacing:0.749px">getid(int)</span><span class="ty" style="left:811.1px;width:80.0px;top:2279.8px;letter-spacing:0.367px">String</span><span class="t" style="left:544.2px;top:2307.9px;letter-spacing:0.319px">checkOnway(int, int)</span><span class="ty" style="left:809.5px;width:80.0px;top:2307.9px;letter-spacing:0.308px">int</span><span class="t" style="left:544.2px;top:2336.1px;letter-spacing:0.364px;width:142.1px">calculate(int, String)</span><span class="ty" style="left:809.5px;width:80.0px;top:2336.1px;letter-spacing:0.308px">int</span><span class="t" style="left:544.2px;top:2364.3px;letter-spacing:0.193px">run()</span><span class="ty" style="left:811.2px;width:80.0px;top:2364.3px;letter-spacing:0.516px">void</span>
<span class="lb" style="left:194.0px;top:652.3px">«create»</span><span class="lb" style="left:622.0px;top:652.3px">«create»</span><span class="lb" style="left:144.0px;top:1073.6px">«create»</span><span class="lb" style="left:285.0px;top:1024.5px">«create»</span><span class="lb" style="left:498.5px;top:1024.5px">«create»</span><span class="lb" style="left:720.0px;top:1036.5px">«create»</span><span class="lb" style="left:966.8px;top:1405.5px">«create»</span><span class="one" style="left:401.1px;top:1071.5px">1</span><span class="one" style="left:449.1px;top:1071.5px">1</span><span class="one" style="left:497.1px;top:1071.5px">1</span><span class="one" style="left:545.1px;top:1071.5px">1</span><span class="one" style="left:593.1px;top:1071.5px">1</span><span class="one" style="left:641.1px;top:1071.5px">1</span><span class="one" style="left:106.1px;top:889.5px">1</span><span class="one" style="left:291.6px;top:960.5px">1</span><span class="one" style="left:720.8px;top:960.5px">1</span><span class="one" style="left:933.3px;top:960.5px">1</span><span class="one" style="left:488.0px;top:632.5px">1</span><span class="one" style="left:916.8px;top:632.5px">1</span><span class="one" style="left:425.8px;top:1748.3px">1</span><span class="one" style="left:531.6px;top:1767.5px">1</span>
<div style="position:absolute;left:1417px;width:5px;top:0px;height:262px;background:#4e4e4e"></div><div style="position:absolute;left:1417px;width:5px;top:476px;height:21px;background:#4e4e4e"></div><div style="position:absolute;left:1417px;width:5px;top:564px;height:51px;background:#4e4e4e"></div><div style="position:absolute;left:1417px;width:5px;top:740px;height:345px;background:#4e4e4e"></div><div style="position:absolute;left:1417px;width:5px;top:1092px;height:264px;background:#4e4e4e"></div><div style="position:absolute;left:1417px;width:5px;top:1407px;height:37px;background:#4e4e4e"></div><div style="position:absolute;left:1417px;width:5px;top:1523px;height:9px;background:#4e4e4e"></div><div style="position:absolute;left:1417px;width:5px;top:1876px;height:8px;background:#4e4e4e"></div><div style="position:absolute;left:1417px;width:5px;top:2119px;height:273px;background:#4e4e4e"></div><div style="position:absolute;left:15px;top:2360px;font-size:18px;line-height:20px;letter-spacing:-0.13px;color:#6f6f6f;white-space:pre;will-change:transform;font-family:'Liberation Sans',sans-serif">Powered by yFiles</div><svg style="position:absolute;left:0;top:2392px" width="160" height="3" viewBox="0 0 160 3"><path d="M0 1.5 H144" stroke="#474747" stroke-width="1"/><path d="M2.5 1.5 H47" stroke="#a9a39a" stroke-width="1" stroke-dasharray="1.2 3.6"/><path d="M92 1.5 H131" stroke="#a9a39a" stroke-width="1" stroke-dasharray="1.2 3.6"/><path d="M82 1.5 H87 M137 1.5 H138 M143 1.5 H144" stroke="#c8c8c8" stroke-width="1"/></svg><div style="position:absolute;left:68px;top:2400px;width:1338px;height:1px;background:#3e3e3e"></div><div style="position:absolute;left:68px;top:2401px;width:1338px;height:2px;background:#515151"></div><div style="position:absolute;left:0;top:2403px;width:1422px;height:1px;background:#ececec"></div>
</div></body></html>
